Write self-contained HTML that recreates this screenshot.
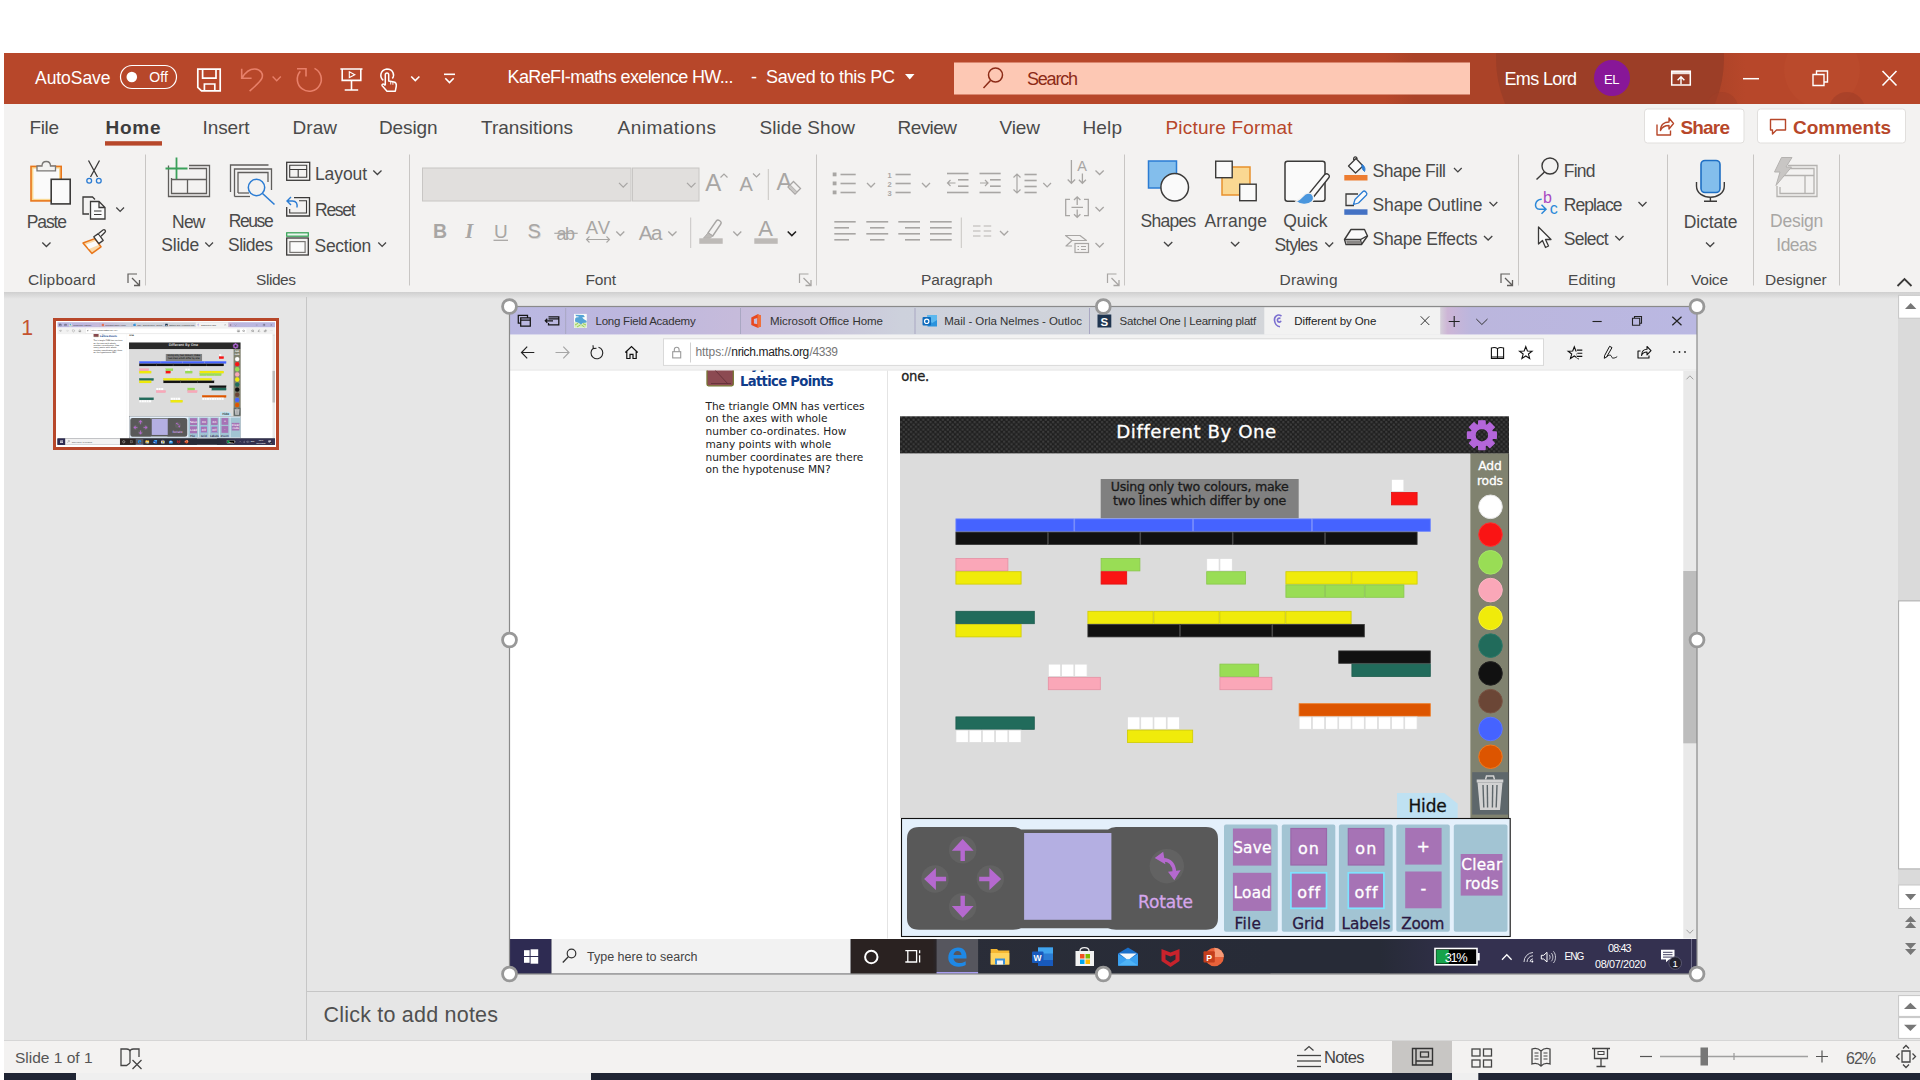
<!DOCTYPE html>
<html lang="en"><head><meta charset="utf-8"><title>KaReFI-maths exelence HW - PowerPoint</title>
<style>
html,body{margin:0;padding:0;background:#fff;width:1920px;height:1080px;overflow:hidden}
svg{display:block;position:absolute;left:0;top:0;font-family:'Liberation Sans',sans-serif}
text{white-space:pre;font-variant-ligatures:none}
</style></head><body>
<svg width="1920" height="1080" viewBox="0 0 1920 1080">
<defs>
<linearGradient id="ribshadow" x1="0" y1="0" x2="0" y2="1"><stop offset="0" stop-color="#CFCFCF"/><stop offset="1" stop-color="#E6E6E6"/></linearGradient>
<linearGradient id="tbdark" x1="0" y1="0" x2="1" y2="0"><stop offset="0" stop-color="#AB4328" stop-opacity="0"/><stop offset=".08" stop-color="#AB4328" stop-opacity="1"/><stop offset=".9" stop-color="#AB4328" stop-opacity="1"/><stop offset="1" stop-color="#AB4328" stop-opacity="0"/></linearGradient>
<clipPath id="tbclip"><rect x="4" y="53" width="1916" height="51"/></clipPath>

<linearGradient id="tabgrad" x1="0" y1="0" x2="1" y2="0"><stop offset="0" stop-color="#BAB8E2"/><stop offset=".10" stop-color="#BDB7DE"/><stop offset=".19" stop-color="#C6BBDB"/><stop offset=".26" stop-color="#C9C4DB"/><stop offset=".33" stop-color="#CDD1DC"/><stop offset=".62" stop-color="#D3D6DA"/><stop offset=".783" stop-color="#D6D3DA"/><stop offset=".79" stop-color="#CDB5D6"/><stop offset=".81" stop-color="#BBB6DD"/><stop offset="1" stop-color="#BAB8E2"/></linearGradient>
<pattern id="dots" x="900" y="416" width="4.9" height="4.9" patternUnits="userSpaceOnUse"><rect width="4.9" height="4.9" fill="#1F1F1F"/><circle cx="1.22" cy="1.22" r="1.25" fill="#3D3D3D"/><circle cx="3.67" cy="3.67" r="1.25" fill="#3D3D3D"/></pattern>
<clipPath id="pageclip"><rect x="509.5" y="370.5" width="1187.5" height="568"/></clipPath>
<linearGradient id="tkgrad" x1="0" y1="0" x2="1" y2="0"><stop offset="0" stop-color="#2A2221"/><stop offset=".195" stop-color="#2A2221"/><stop offset=".22" stop-color="#2A2D38"/><stop offset="1" stop-color="#272B37"/></linearGradient>
<linearGradient id="tkgrad2" x1="0" y1="0" x2="1" y2="0"><stop offset="0" stop-color="#272B37"/><stop offset="1" stop-color="#343150"/></linearGradient>

</defs>
<g id="titlebar">
<rect x="4" y="53" width="1916" height="51" fill="#B7472A" />
<rect x="1385" y="53" width="360" height="51" fill="url(#tbdark)"/>
<circle cx="1610" cy="59" r="114" fill="#9C3E27" clip-path="url(#tbclip)"/>
<circle cx="1822" cy="70" r="38" fill="#BF4E2E" opacity=".45" clip-path="url(#tbclip)"/>
<circle cx="1847" cy="110" r="18" fill="#A03E28" opacity=".6" clip-path="url(#tbclip)"/>
<circle cx="1722" cy="108" r="16" fill="#A03E28" opacity=".5" clip-path="url(#tbclip)"/>
<text x="35" y="84" font-size="17.5" fill="#fff" textLength="75.5" lengthAdjust="spacing" >AutoSave</text>
<rect x="120.5" y="65.5" width="56" height="23" fill="none" stroke="#fff" stroke-width="1.2" rx="11.5" />
<circle cx="131.8" cy="77" r="5.3" fill="#fff" />
<text x="149.3" y="82" font-size="14" fill="#fff" textLength="18.7" lengthAdjust="spacing" >Off</text>
<path d="M197.8 69.2 H220.2 V90.8 H201.5 L197.8 87.3 Z M202.6 69.2 V78.2 H216 V69.2 M204.4 90.8 V84 H214.8 V90.8" fill="none" stroke="#fff" stroke-width="1.7" stroke-linejoin="miter"/>
<path d="M241.7 68.8 V78.3 H251.6 M242 78 C245.5 72 250 68.8 255 69 C260.5 69.3 263.5 73.5 262 78 C261 81 256 85.5 249.6 91.2" fill="none" stroke="#E8806A" stroke-width="1.6" />
<path d="M272.6 76.55 L276.7 80.65 L280.8 76.55" fill="none" stroke="#E8806A" stroke-width="1.4" stroke-linecap="butt" stroke-linejoin="miter"/>
<path d="M314.5 68.4 A12 12 0 1 1 300.3 71.3 M297 68.8 H306 V76.5" fill="none" stroke="#E8806A" stroke-width="1.6" />
<path d="M340.4 69 H362.5 M342.2 69 V80.4 H360.8 V69 M351.5 80.4 V90 M344.7 90 H358.2" fill="none" stroke="#fff" stroke-width="1.6" />
<path d="M349.3 71.8 L354.8 74.7 L349.3 77.6 Z" fill="none" stroke="#fff" stroke-width="1.1" />
<path d="M383.3 80.3 C379.5 77.5 379.8 70 386.8 69 C393.5 69 394.8 75.5 392.3 78.5" fill="none" stroke="#fff" stroke-width="1.5" />
<path d="M385.3 85.5 V74.8 C385.3 72.3 388.7 72.3 388.7 74.8 V81 L394 82 C396 82.5 396.6 83.8 396.3 86 L395.3 91.2 H387 L382.2 85.8 C381.3 84.5 383.3 82.8 385.3 85.5" fill="none" stroke="#fff" stroke-width="1.5" stroke-linejoin="round"/>
<path d="M390.7 81.5 V84.5 M392.9 82 V84.8" fill="none" stroke="#fff" stroke-width="0.9" />
<path d="M411.2 76.55 L415.3 80.65 L419.4 76.55" fill="none" stroke="#fff" stroke-width="1.6" stroke-linecap="butt" stroke-linejoin="miter"/>
<line x1="444" y1="74.3" x2="455" y2="74.3" stroke="#fff" stroke-width="1.6" />
<path d="M445.3 78.3 L449.5 82.5 L453.7 78.3" fill="none" stroke="#fff" stroke-width="1.6" stroke-linecap="butt" stroke-linejoin="miter"/>
<text x="507.5" y="83" font-size="18" fill="#fff" textLength="226" lengthAdjust="spacing" >KaReFI-maths exelence HW...</text>
<text x="751" y="83" font-size="18" fill="#fff" >-</text>
<text x="766" y="83" font-size="18" fill="#fff" textLength="129" lengthAdjust="spacing" >Saved to this PC</text>
<path d="M905 74 H914.5 L909.75 79.5 Z" fill="#fff" />
<rect x="954" y="62.5" width="516" height="32" fill="#FDC8B4" />
<circle cx="995.5" cy="75" r="7" fill="none" stroke="#8C2B17" stroke-width="1.5" />
<line x1="990.5" y1="80.5" x2="983.5" y2="88" stroke="#8C2B17" stroke-width="1.5" />
<text x="1027" y="85" font-size="18" fill="#8C2B17" textLength="51" lengthAdjust="spacing" >Search</text>
<text x="1504.5" y="85" font-size="18" fill="#fff" textLength="72.5" lengthAdjust="spacing" >Ems Lord</text>
<circle cx="1612" cy="78" r="18" fill="#881798" />
<text x="1604" y="84.3" font-size="13" fill="#fff" textLength="15.5" lengthAdjust="spacing" >EL</text>
<rect x="1671.7" y="71.2" width="18.6" height="13.8" fill="none" stroke="#fff" stroke-width="1.5" />
<rect x="1671.7" y="71.2" width="18.6" height="3" fill="#fff" opacity=".85"/>
<path d="M1681 84.3 V77 M1677.6 80.3 L1681 76.8 L1684.4 80.3" fill="none" stroke="#fff" stroke-width="1.4" />
<line x1="1743" y1="78.7" x2="1759" y2="78.7" stroke="#fff" stroke-width="1.5" />
<path d="M1813 74.5 H1824 V85.5 H1813 Z M1816.5 74 V71 H1827.5 V82 H1824.5" fill="none" stroke="#fff" stroke-width="1.4" />
<path d="M1882.5 71 L1896.5 85.5 M1896.5 71 L1882.5 85.5" fill="none" stroke="#fff" stroke-width="1.6" />
</g>
<g id="tabs">
<rect x="4" y="104" width="1916" height="188" fill="#F3F2F1" />
<text x="29.5" y="134" font-size="19" fill="#4A4A4A" textLength="29.5" lengthAdjust="spacing" >File</text>
<text x="202.5" y="134" font-size="19" fill="#4A4A4A" textLength="47" lengthAdjust="spacing" >Insert</text>
<text x="292.5" y="134" font-size="19" fill="#4A4A4A" textLength="44.5" lengthAdjust="spacing" >Draw</text>
<text x="379" y="134" font-size="19" fill="#4A4A4A" textLength="58.5" lengthAdjust="spacing" >Design</text>
<text x="481" y="134" font-size="19" fill="#4A4A4A" textLength="92" lengthAdjust="spacing" >Transitions</text>
<text x="617.5" y="134" font-size="19" fill="#4A4A4A" textLength="98.5" lengthAdjust="spacing" >Animations</text>
<text x="759.5" y="134" font-size="19" fill="#4A4A4A" textLength="95.5" lengthAdjust="spacing" >Slide Show</text>
<text x="897.5" y="134" font-size="19" fill="#4A4A4A" textLength="59.5" lengthAdjust="spacing" >Review</text>
<text x="999.5" y="134" font-size="19" fill="#4A4A4A" textLength="40.5" lengthAdjust="spacing" >View</text>
<text x="1082.5" y="134" font-size="19" fill="#4A4A4A" textLength="39.5" lengthAdjust="spacing" >Help</text>
<text x="105.5" y="134" font-size="19" fill="#3D3D3D" font-weight="700" textLength="55" lengthAdjust="spacing" >Home</text>
<rect x="105" y="141.2" width="57" height="4.4" fill="#B7472A" />
<text x="1165.5" y="134" font-size="19" fill="#B7472A" textLength="127" lengthAdjust="spacing" >Picture Format</text>
<rect x="1644.5" y="109" width="99.5" height="34" fill="#fff" stroke="#E1DFDD" stroke-width="1" rx="3" />
<path d="M1657 124.5 V135 H1670.5 V130.5 M1660.5 130.5 C1660.5 124 1665 122 1669 122 V118 L1673.5 123.5 L1669 129 V125.5 C1664.5 125.5 1662 127 1660.5 130.5 Z" fill="none" stroke="#B7472A" stroke-width="1.4" stroke-linejoin="round"/>
<text x="1680.5" y="134" font-size="19" fill="#B7472A" font-weight="700" textLength="49.5" lengthAdjust="spacing" >Share</text>
<rect x="1757.5" y="109" width="148" height="34" fill="#fff" stroke="#E1DFDD" stroke-width="1" rx="3" />
<path d="M1770.5 119.5 H1785.5 V130 H1776.5 L1772.5 134 V130 H1770.5 Z" fill="none" stroke="#B7472A" stroke-width="1.4" stroke-linejoin="round"/>
<text x="1793" y="134" font-size="19" fill="#B7472A" font-weight="700" textLength="98" lengthAdjust="spacing" >Comments</text>
</g>
<g id="ribbon">
<line x1="145.5" y1="154.5" x2="145.5" y2="285.5" stroke="#C8C6C4" stroke-width="1" />
<line x1="409.5" y1="154.5" x2="409.5" y2="285.5" stroke="#C8C6C4" stroke-width="1" />
<line x1="816.5" y1="154.5" x2="816.5" y2="285.5" stroke="#C8C6C4" stroke-width="1" />
<line x1="1124.5" y1="154.5" x2="1124.5" y2="285.5" stroke="#C8C6C4" stroke-width="1" />
<line x1="1518.5" y1="154.5" x2="1518.5" y2="285.5" stroke="#C8C6C4" stroke-width="1" />
<line x1="1667.5" y1="154.5" x2="1667.5" y2="285.5" stroke="#C8C6C4" stroke-width="1" />
<line x1="1753.5" y1="154.5" x2="1753.5" y2="285.5" stroke="#C8C6C4" stroke-width="1" />
<line x1="1839.5" y1="154.5" x2="1839.5" y2="285.5" stroke="#C8C6C4" stroke-width="1" />
<text x="28" y="285" font-size="15.5" fill="#4A4A4A" textLength="67.7" lengthAdjust="spacing" >Clipboard</text>
<text x="256" y="285" font-size="15.5" fill="#4A4A4A" textLength="40" lengthAdjust="spacing" >Slides</text>
<text x="585.5" y="285" font-size="15.5" fill="#4A4A4A" textLength="30.5" lengthAdjust="spacing" >Font</text>
<text x="921" y="285" font-size="15.5" fill="#4A4A4A" textLength="71.5" lengthAdjust="spacing" >Paragraph</text>
<text x="1279.5" y="285" font-size="15.5" fill="#4A4A4A" textLength="58" lengthAdjust="spacing" >Drawing</text>
<text x="1568" y="285" font-size="15.5" fill="#4A4A4A" textLength="47.7" lengthAdjust="spacing" >Editing</text>
<text x="1691" y="285" font-size="15.5" fill="#4A4A4A" textLength="37" lengthAdjust="spacing" >Voice</text>
<text x="1765" y="285" font-size="15.5" fill="#4A4A4A" textLength="61.7" lengthAdjust="spacing" >Designer</text>
<path d="M128 283 V274 H137" fill="none" stroke="#605E5C" stroke-width="1.2" />
<path d="M132 278 L139.5 285.5 M134 285.5 H139.5 V280" fill="none" stroke="#605E5C" stroke-width="1.3" />
<path d="M799.5 283 V274 H808.5" fill="none" stroke="#A8A6A4" stroke-width="1.2" />
<path d="M803.5 278 L811.0 285.5 M805.5 285.5 H811.0 V280" fill="none" stroke="#A8A6A4" stroke-width="1.3" />
<path d="M1107.5 283 V274 H1116.5" fill="none" stroke="#A8A6A4" stroke-width="1.2" />
<path d="M1111.5 278 L1119.0 285.5 M1113.5 285.5 H1119.0 V280" fill="none" stroke="#A8A6A4" stroke-width="1.3" />
<path d="M1501 283 V274 H1510" fill="none" stroke="#605E5C" stroke-width="1.2" />
<path d="M1505 278 L1512.5 285.5 M1507 285.5 H1512.5 V280" fill="none" stroke="#605E5C" stroke-width="1.3" />
<path d="M1897.5 286 L1904.5 279 L1911.5 286" fill="none" stroke="#3B3A39" stroke-width="1.8" />
<rect x="31" y="166.4" width="30.2" height="34.5" fill="#FAD892" stroke="#E8761B" stroke-width="1.6" />
<rect x="33.4" y="168.6" width="25.6" height="30.2" fill="#FAFAFA" />
<path d="M37 170.8 V166 H42 C42 160 50.5 160 50.5 166 H55.5 V170.8 Z" fill="#F3F2F1" stroke="#797775" stroke-width="1.3" />
<rect x="51.2" y="179.3" width="19" height="24.6" fill="#FAFAFA" stroke="#3B3A39" stroke-width="1.6" />
<text x="26.7" y="227.5" font-size="17.5" fill="#4A4A4A" textLength="40.3" lengthAdjust="spacing" >Paste</text>
<path d="M42.3 242.45 L46.4 246.55 L50.5 242.45" fill="none" stroke="#444" stroke-width="1.3" stroke-linecap="butt" stroke-linejoin="miter"/>
<path d="M88.5 160.5 L97.5 177 M99.5 160.5 L90.5 177" fill="none" stroke="#3B3A39" stroke-width="1.3" />
<circle cx="89.2" cy="180.8" r="2.4" fill="none" stroke="#2B7CD3" stroke-width="1.3" />
<circle cx="98.8" cy="180.8" r="2.4" fill="none" stroke="#2B7CD3" stroke-width="1.3" />
<path d="M89 214 H83 V197 H92.5 L95 199.5" fill="none" stroke="#3B3A39" stroke-width="1.3" />
<path d="M90.5 201.5 H99 L105 207.5 V219 H90.5 Z M99 201.5 V207.5 H105" fill="#FAFAFA" stroke="#3B3A39" stroke-width="1.3" />
<path d="M94 211 H101.5 M94 214.5 H101.5" fill="none" stroke="#3B3A39" stroke-width="1.1" />
<path d="M116.3 207.575 L120.15 211.425 L124 207.575" fill="none" stroke="#444" stroke-width="1.3" stroke-linecap="butt" stroke-linejoin="miter"/>
<path d="M83 243 L94.8 238.6 L101 246.8 L92 253.4 Z" fill="#FBD9A8" stroke="#E8761B" stroke-width="1.5" stroke-linejoin="round"/>
<path d="M86 244.5 L95.5 241 L98.5 245 L89 249 Z" fill="#FAFAFA" />
<path d="M93.8 236.8 L98.3 233.6 L103.2 240.4 L98.8 243.6 Z" fill="#FAFAFA" stroke="#3B3A39" stroke-width="1.3" stroke-linejoin="round"/>
<path d="M98.6 233.6 L103 230 C104.6 229 106.3 231 105 232.3 L101 236.2" fill="#FAFAFA" stroke="#3B3A39" stroke-width="1.3" />
<path d="M168.5 165.5 V196.5 H209.5 V165.5 H189" fill="none" stroke="#605E5C" stroke-width="1.3" />
<path d="M171.5 178 V193.5 H206.5 V168.5 H189" fill="none" stroke="#605E5C" stroke-width="1.3" />
<path d="M171.5 179.5 H206.5 M187.5 179.5 V193.5" fill="none" stroke="#605E5C" stroke-width="1.3" />
<path d="M176.5 157.5 V179 M165.5 168.5 H187.5" fill="none" stroke="#3AA05A" stroke-width="1.8" />
<text x="172" y="227.5" font-size="17.5" fill="#4A4A4A" textLength="33.5" lengthAdjust="spacing" >New</text>
<text x="161.3" y="251" font-size="17.5" fill="#4A4A4A" textLength="38" lengthAdjust="spacing" >Slide</text>
<path d="M205.3 242.575 L209.15 246.425 L213 242.575" fill="none" stroke="#444" stroke-width="1.3" stroke-linecap="butt" stroke-linejoin="miter"/>
<path d="M230.5 192 V165 H268.5" fill="none" stroke="#605E5C" stroke-width="1.3" />
<path d="M234.5 196.5 V169 H271.5 V190" fill="none" stroke="#605E5C" stroke-width="1.3" />
<path d="M234.5 196.5 H250" fill="none" stroke="#605E5C" stroke-width="1.3" />
<path d="M238 193 V172.5 H268 V182" fill="none" stroke="#605E5C" stroke-width="1.3" />
<path d="M238 193 H249" fill="none" stroke="#605E5C" stroke-width="1.3" />
<circle cx="256.5" cy="187.5" r="8.2" fill="#F3F2F1" stroke="#2B7CD3" stroke-width="1.5" />
<line x1="262.5" y1="193.5" x2="274.5" y2="204.5" stroke="#2B7CD3" stroke-width="1.6" />
<text x="228.7" y="226.8" font-size="17.5" fill="#4A4A4A" textLength="45" lengthAdjust="spacing" >Reuse</text>
<text x="228" y="250.7" font-size="17.5" fill="#4A4A4A" textLength="45" lengthAdjust="spacing" >Slides</text>
<rect x="286.7" y="162.3" width="23" height="18" fill="none" stroke="#3B3A39" stroke-width="1.3" />
<path d="M289.7 165.3 H306.7 V177.3 H289.7 Z M289.7 169.5 H306.7 M298.2 169.5 V177.3" fill="none" stroke="#3B3A39" stroke-width="1.1" />
<text x="315" y="179.5" font-size="17.5" fill="#4A4A4A" textLength="52" lengthAdjust="spacing" >Layout</text>
<path d="M373.3 170.45 L377.4 174.55 L381.5 170.45" fill="none" stroke="#444" stroke-width="1.3" stroke-linecap="butt" stroke-linejoin="miter"/>
<path d="M294 197.7 H309.5 V216 H286.7 V207" fill="none" stroke="#3B3A39" stroke-width="1.3" />
<path d="M299 200.7 H306.5 V213 H289.7 V209" fill="none" stroke="#3B3A39" stroke-width="1.1" />
<path d="M291 197 L287 201 L291 205 M287.5 201 H292.5 C296.5 201 297.5 204 297 207.5" fill="none" stroke="#2B7CD3" stroke-width="1.4" />
<text x="315" y="215.5" font-size="17.5" fill="#4A4A4A" textLength="40.7" lengthAdjust="spacing" >Reset</text>
<rect x="286.7" y="232.8" width="21.6" height="3.4" fill="#EAF6EE" stroke="#2E9E4F" stroke-width="1.2" />
<rect x="286.7" y="238" width="21.6" height="17" fill="none" stroke="#3B3A39" stroke-width="1.3" />
<rect x="289.9" y="241.6" width="15.2" height="10.8" fill="#FAFAFA" stroke="#797775" stroke-width="1.2" />
<text x="314.5" y="251.6" font-size="17.5" fill="#4A4A4A" textLength="56.7" lengthAdjust="spacing" >Section</text>
<path d="M378.3 242.575 L382.15 246.425 L386 242.575" fill="none" stroke="#444" stroke-width="1.3" stroke-linecap="butt" stroke-linejoin="miter"/>
<rect x="422.5" y="168" width="208.5" height="33" fill="#E1DFDD" stroke="#C8C6C4" stroke-width="1" />
<rect x="632.5" y="168" width="66.5" height="33" fill="#E1DFDD" stroke="#C8C6C4" stroke-width="1" />
<path d="M619 182.875 L623.25 187.125 L627.5 182.875" fill="none" stroke="#A8A6A4" stroke-width="1.3" stroke-linecap="butt" stroke-linejoin="miter"/>
<path d="M687 182.875 L691.25 187.125 L695.5 182.875" fill="none" stroke="#A8A6A4" stroke-width="1.3" stroke-linecap="butt" stroke-linejoin="miter"/>
<text x="705.3" y="190.5" font-size="24" fill="#A8A6A4" textLength="16.7" lengthAdjust="spacing" >A</text>
<path d="M720.5 177.5 L724 174 L727.5 177.5" fill="none" stroke="#A8A6A4" stroke-width="1.2" />
<text x="739.5" y="190.5" font-size="20" fill="#A8A6A4" textLength="13.5" lengthAdjust="spacing" >A</text>
<path d="M753 173.5 L756.5 177 L760 173.5" fill="none" stroke="#A8A6A4" stroke-width="1.2" />
<line x1="768.3" y1="169" x2="768.3" y2="200" stroke="#C8C6C4" stroke-width="1" />
<text x="776.5" y="190" font-size="23.5" fill="#A8A6A4" textLength="15.5" lengthAdjust="spacing" >A</text>
<path d="M793.5 181.5 L800.5 188.5 L795 194 L788 187 Z" fill="#F3F2F1" stroke="#A8A6A4" stroke-width="1.3" />
<path d="M790.3 185 L797.3 192 L795 194 L788 187 Z" fill="#C8C6C4" stroke="#A8A6A4" stroke-width="0.8" />
<text x="433" y="238" font-size="19.5" fill="#A8A6A4" font-weight="700" textLength="11" lengthAdjust="spacing" >B</text>
<text x="465.3" y="238" font-size="20.5" fill="#A8A6A4" font-family="'Liberation Serif',serif" font-weight="700" font-style="italic" >I</text>
<text x="494" y="237.5" font-size="19" fill="#A8A6A4" textLength="13.5" lengthAdjust="spacing" >U</text>
<line x1="493.5" y1="240.3" x2="508" y2="240.3" stroke="#A8A6A4" stroke-width="1.3" />
<text x="528.3" y="239" font-size="20" fill="#D6D4D2" textLength="11.7" lengthAdjust="spacing" >S</text>
<text x="527.5" y="238" font-size="20" fill="#A8A6A4" textLength="11.7" lengthAdjust="spacing" >S</text>
<text x="556.5" y="239.5" font-size="18" fill="#A8A6A4" textLength="18.5" lengthAdjust="spacing" >ab</text>
<line x1="554.3" y1="233.3" x2="577.7" y2="233.3" stroke="#A8A6A4" stroke-width="1.2" />
<text x="585.8" y="234" font-size="18.5" fill="#A8A6A4" textLength="24.2" lengthAdjust="spacing" >AV</text>
<path d="M586.5 239.5 H609.5 M589.5 236.5 L586.5 239.5 L589.5 242.5 M606.5 236.5 L609.5 239.5 L606.5 242.5" fill="none" stroke="#A8A6A4" stroke-width="1.1" />
<path d="M616.3 231.5 L620.3 235.5 L624.3 231.5" fill="none" stroke="#A8A6A4" stroke-width="1.3" stroke-linecap="butt" stroke-linejoin="miter"/>
<text x="638.8" y="240" font-size="20.5" fill="#A8A6A4" textLength="23.7" lengthAdjust="spacing" >Aa</text>
<path d="M668.3 231.45 L672.4 235.55 L676.5 231.45" fill="none" stroke="#A8A6A4" stroke-width="1.3" stroke-linecap="butt" stroke-linejoin="miter"/>
<line x1="690.7" y1="217.5" x2="690.7" y2="248" stroke="#C8C6C4" stroke-width="1" />
<path d="M708 232.8 L716.3 221 C718 218.8 722.3 221.5 720.8 224 L712.7 236 Z" fill="none" stroke="#A8A6A4" stroke-width="1.4" stroke-linejoin="round"/>
<path d="M708 232.8 L712.7 236 L710 238.3 H703.3 Z" fill="#BDBAB7" stroke="#A8A6A4" stroke-width="0.8" stroke-linejoin="round"/>
<rect x="699.3" y="238.3" width="23.4" height="5.5" fill="#BDBAB7" />
<path d="M733.3 231.5 L737.3 235.5 L741.3 231.5" fill="none" stroke="#A8A6A4" stroke-width="1.3" stroke-linecap="butt" stroke-linejoin="miter"/>
<text x="758.3" y="236" font-size="22" fill="#A8A6A4" textLength="15.2" lengthAdjust="spacing" >A</text>
<rect x="754.3" y="238.3" width="23.4" height="5.5" fill="#BDBAB7" />
<path d="M787.7 231.425 L791.85 235.575 L796 231.425" fill="none" stroke="#201F1E" stroke-width="1.5" stroke-linecap="butt" stroke-linejoin="miter"/>
<rect x="832.7" y="172.5" width="3.8" height="3.8" fill="#A8A6A4" />
<line x1="840.5" y1="174.5" x2="855.7" y2="174.5" stroke="#A8A6A4" stroke-width="1.6" />
<rect x="832.7" y="181.5" width="3.8" height="3.8" fill="#A8A6A4" />
<line x1="840.5" y1="183.5" x2="855.7" y2="183.5" stroke="#A8A6A4" stroke-width="1.6" />
<rect x="832.7" y="190.5" width="3.8" height="3.8" fill="#A8A6A4" />
<line x1="840.5" y1="192.5" x2="855.7" y2="192.5" stroke="#A8A6A4" stroke-width="1.6" />
<path d="M867 183 L871 187 L875 183" fill="none" stroke="#A8A6A4" stroke-width="1.3" stroke-linecap="butt" stroke-linejoin="miter"/>
<text x="887.5" y="177.5" font-size="7.5" fill="#A8A6A4" font-weight="700" >1</text>
<line x1="895.5" y1="174.5" x2="910.7" y2="174.5" stroke="#A8A6A4" stroke-width="1.6" />
<text x="887.5" y="186.5" font-size="7.5" fill="#A8A6A4" font-weight="700" >2</text>
<line x1="895.5" y1="183.5" x2="910.7" y2="183.5" stroke="#A8A6A4" stroke-width="1.6" />
<text x="887.5" y="195.5" font-size="7.5" fill="#A8A6A4" font-weight="700" >3</text>
<line x1="895.5" y1="192.5" x2="910.7" y2="192.5" stroke="#A8A6A4" stroke-width="1.6" />
<path d="M922 183 L926 187 L930 183" fill="none" stroke="#A8A6A4" stroke-width="1.3" stroke-linecap="butt" stroke-linejoin="miter"/>
<line x1="947" y1="173.5" x2="968.5" y2="173.5" stroke="#A8A6A4" stroke-width="1.6" />
<line x1="947" y1="192.5" x2="968.5" y2="192.5" stroke="#A8A6A4" stroke-width="1.6" />
<line x1="958" y1="179.8" x2="968.5" y2="179.8" stroke="#A8A6A4" stroke-width="1.6" />
<line x1="958" y1="186.2" x2="968.5" y2="186.2" stroke="#A8A6A4" stroke-width="1.6" />
<path d="M947.5 183 H955.5 M950.5 180 L947.5 183 L950.5 186" fill="none" stroke="#A8A6A4" stroke-width="1.2" />
<line x1="979.5" y1="173.5" x2="1000.7" y2="173.5" stroke="#A8A6A4" stroke-width="1.6" />
<line x1="979.5" y1="192.5" x2="1000.7" y2="192.5" stroke="#A8A6A4" stroke-width="1.6" />
<line x1="990" y1="179.8" x2="1000.7" y2="179.8" stroke="#A8A6A4" stroke-width="1.6" />
<line x1="990" y1="186.2" x2="1000.7" y2="186.2" stroke="#A8A6A4" stroke-width="1.6" />
<path d="M980 183 H988 M985 180 L988 183 L985 186" fill="none" stroke="#A8A6A4" stroke-width="1.2" />
<line x1="1024.5" y1="174.5" x2="1036.7" y2="174.5" stroke="#A8A6A4" stroke-width="1.6" />
<line x1="1024.5" y1="180.5" x2="1036.7" y2="180.5" stroke="#A8A6A4" stroke-width="1.6" />
<line x1="1024.5" y1="186.5" x2="1036.7" y2="186.5" stroke="#A8A6A4" stroke-width="1.6" />
<line x1="1024.5" y1="192.5" x2="1036.7" y2="192.5" stroke="#A8A6A4" stroke-width="1.6" />
<path d="M1017 174 V193 M1013.5 177.5 L1017 174 L1020.5 177.5 M1013.5 189.5 L1017 193 L1020.5 189.5" fill="none" stroke="#A8A6A4" stroke-width="1.2" />
<path d="M1043.3 183.075 L1047.15 186.925 L1051 183.075" fill="none" stroke="#A8A6A4" stroke-width="1.3" stroke-linecap="butt" stroke-linejoin="miter"/>
<path d="M1071.4 160 V183.3 M1067.7 179.5 L1071.4 183.3 L1075.1 179.5 M1082.4 173.5 V183.3 M1078.9 179.8 L1082.4 183.3 L1085.9 179.8" fill="none" stroke="#A8A6A4" stroke-width="1.3" />
<text x="1077.3" y="171.3" font-size="14.5" fill="#A8A6A4" textLength="10.2" lengthAdjust="spacing" >A</text>
<path d="M1095.5 170.45 L1099.6 174.55 L1103.7 170.45" fill="none" stroke="#A8A6A4" stroke-width="1.3" stroke-linecap="butt" stroke-linejoin="miter"/>
<path d="M1070 199.3 H1065.7 V215.7 H1070 M1084 199.3 H1088.3 V215.7 H1084 M1071.5 207.3 H1083" fill="none" stroke="#A8A6A4" stroke-width="1.3" />
<path d="M1077.2 196.8 V205 M1074 200 L1077.2 196.8 L1080.4 200 M1077.2 217.3 V209.5 M1074 214.2 L1077.2 217.3 L1080.4 214.2" fill="none" stroke="#A8A6A4" stroke-width="1.3" />
<path d="M1095.5 206.95 L1099.6 211.05 L1103.7 206.95" fill="none" stroke="#A8A6A4" stroke-width="1.3" stroke-linecap="butt" stroke-linejoin="miter"/>
<path d="M1065.5 235.5 H1080 L1086.5 240.5 H1072 Z M1072 240.5 L1066 246 H1072" fill="none" stroke="#A8A6A4" stroke-width="1.2" stroke-linejoin="round"/>
<rect x="1075" y="243.5" width="13.5" height="9" fill="none" stroke="#A8A6A4" stroke-width="1.2" />
<path d="M1077.5 246.5 H1079 M1081 246.5 H1086 M1077.5 249.5 H1079 M1081 249.5 H1086" fill="none" stroke="#A8A6A4" stroke-width="1.1" />
<path d="M1095.5 242.95 L1099.6 247.05 L1103.7 242.95" fill="none" stroke="#A8A6A4" stroke-width="1.3" stroke-linecap="butt" stroke-linejoin="miter"/>
<line x1="834.3" y1="221.8" x2="855.7" y2="221.8" stroke="#A8A6A4" stroke-width="1.6" />
<line x1="834.3" y1="233.8" x2="855.7" y2="233.8" stroke="#A8A6A4" stroke-width="1.6" />
<line x1="834.3" y1="227.8" x2="849" y2="227.8" stroke="#A8A6A4" stroke-width="1.6" />
<line x1="834.3" y1="239.8" x2="849" y2="239.8" stroke="#A8A6A4" stroke-width="1.6" />
<line x1="866.3" y1="221.8" x2="888.2" y2="221.8" stroke="#A8A6A4" stroke-width="1.6" />
<line x1="866.3" y1="233.8" x2="888.2" y2="233.8" stroke="#A8A6A4" stroke-width="1.6" />
<line x1="870" y1="227.8" x2="884.5" y2="227.8" stroke="#A8A6A4" stroke-width="1.6" />
<line x1="870" y1="239.8" x2="884.5" y2="239.8" stroke="#A8A6A4" stroke-width="1.6" />
<line x1="898.3" y1="221.8" x2="920" y2="221.8" stroke="#A8A6A4" stroke-width="1.6" />
<line x1="898.3" y1="233.8" x2="920" y2="233.8" stroke="#A8A6A4" stroke-width="1.6" />
<line x1="905" y1="227.8" x2="920" y2="227.8" stroke="#A8A6A4" stroke-width="1.6" />
<line x1="905" y1="239.8" x2="920" y2="239.8" stroke="#A8A6A4" stroke-width="1.6" />
<line x1="930" y1="221.8" x2="951.7" y2="221.8" stroke="#A8A6A4" stroke-width="1.6" />
<line x1="930" y1="227.8" x2="951.7" y2="227.8" stroke="#A8A6A4" stroke-width="1.6" />
<line x1="930" y1="233.8" x2="951.7" y2="233.8" stroke="#A8A6A4" stroke-width="1.6" />
<line x1="930" y1="239.8" x2="951.7" y2="239.8" stroke="#A8A6A4" stroke-width="1.6" />
<line x1="961.3" y1="217.5" x2="961.3" y2="248" stroke="#C8C6C4" stroke-width="1" />
<line x1="973" y1="226" x2="980.5" y2="226" stroke="#C4C2C0" stroke-width="1.3" />
<line x1="983.7" y1="226" x2="991.2" y2="226" stroke="#C4C2C0" stroke-width="1.3" />
<line x1="973" y1="231" x2="980.5" y2="231" stroke="#C4C2C0" stroke-width="1.3" />
<line x1="983.7" y1="231" x2="991.2" y2="231" stroke="#C4C2C0" stroke-width="1.3" />
<line x1="973" y1="236" x2="980.5" y2="236" stroke="#C4C2C0" stroke-width="1.3" />
<line x1="983.7" y1="236" x2="991.2" y2="236" stroke="#C4C2C0" stroke-width="1.3" />
<path d="M1000 230.95 L1004.1 235.05 L1008.2 230.95" fill="none" stroke="#A8A6A4" stroke-width="1.3" stroke-linecap="butt" stroke-linejoin="miter"/>
<rect x="1148.5" y="161" width="28" height="27" fill="#83BEEC" stroke="#2B7CD3" stroke-width="1.5" />
<circle cx="1174.7" cy="187.2" r="13.8" fill="#FAFAFA" stroke="#3B3A39" stroke-width="1.5" />
<text x="1140.5" y="227" font-size="17.5" fill="#4A4A4A" textLength="55.8" lengthAdjust="spacing" >Shapes</text>
<path d="M1164 241.925 L1168.15 246.075 L1172.3 241.925" fill="none" stroke="#444" stroke-width="1.3" stroke-linecap="butt" stroke-linejoin="miter"/>
<rect x="1222" y="167" width="28" height="28" fill="#FAD892" stroke="#E8912D" stroke-width="1.5" />
<rect x="1215.7" y="161.2" width="16.5" height="16.5" fill="#FAFAFA" stroke="#3B3A39" stroke-width="1.4" />
<rect x="1239.7" y="184.2" width="16.5" height="16.5" fill="#FAFAFA" stroke="#3B3A39" stroke-width="1.4" />
<text x="1204.5" y="227" font-size="17.5" fill="#4A4A4A" textLength="62.5" lengthAdjust="spacing" >Arrange</text>
<path d="M1231 241.925 L1235.15 246.075 L1239.3 241.925" fill="none" stroke="#444" stroke-width="1.3" stroke-linecap="butt" stroke-linejoin="miter"/>
<rect x="1285" y="161.2" width="40" height="40" fill="#FAFAFA" stroke="#3B3A39" stroke-width="1.5" rx="2.5" />
<path d="M1328.6 178 L1313.5 197 L1309 193.6 L1324.5 174.8 C1327 172.3 1331 175.3 1328.6 178 Z" fill="#FAFAFA" stroke="#3B3A39" stroke-width="1.4" stroke-linejoin="round"/>
<path d="M1295.5 201 C1301.5 200.5 1302.5 193.5 1308.5 193 C1313.5 193.3 1315 198.5 1312 201.8 C1308 205.5 1299.5 205 1295.5 201 Z" fill="#4A96DD" stroke="#F3F2F1" stroke-width="1.2" />
<text x="1283.3" y="227" font-size="17.5" fill="#4A4A4A" textLength="44.2" lengthAdjust="spacing" >Quick</text>
<text x="1274.5" y="250.7" font-size="17.5" fill="#4A4A4A" textLength="43.5" lengthAdjust="spacing" >Styles</text>
<path d="M1325.3 242.525 L1329.25 246.475 L1333.2 242.525" fill="none" stroke="#444" stroke-width="1.3" stroke-linecap="butt" stroke-linejoin="miter"/>
<rect x="1344.3" y="175" width="23.2" height="5.5" fill="#ED7D31" />
<path d="M1348.5 166 L1356 158.5 L1363 166 L1355.5 173 Z M1354 160.5 C1352 156 1358 155.5 1357 160" fill="#FAFAFA" stroke="#3B3A39" stroke-width="1.3" stroke-linejoin="round"/>
<path d="M1362 164.5 C1365 166.5 1365.5 169 1364.5 171.5 C1362.5 170 1361.5 167.5 1362 164.5 Z" fill="#2B7CD3" stroke="#2B7CD3" stroke-width="1" />
<text x="1372.5" y="177" font-size="17.5" fill="#4A4A4A" textLength="73.5" lengthAdjust="spacing" >Shape Fill</text>
<path d="M1454 168.075 L1457.85 171.925 L1461.7 168.075" fill="none" stroke="#444" stroke-width="1.3" stroke-linecap="butt" stroke-linejoin="miter"/>
<rect x="1344.3" y="209.3" width="23.2" height="5.5" fill="#4472C4" />
<path d="M1358 194 H1346 V205.5 H1354" fill="none" stroke="#3B3A39" stroke-width="1.3" />
<path d="M1353.5 204.5 L1355 199.5 L1363 191.5 C1364.5 190 1368 193 1366.5 195 L1358.5 203 Z" fill="#FAFAFA" stroke="#2B7CD3" stroke-width="1.3" stroke-linejoin="round"/>
<text x="1372.5" y="210.8" font-size="17.5" fill="#4A4A4A" textLength="110" lengthAdjust="spacing" >Shape Outline</text>
<path d="M1489.5 202.05 L1493.4 205.95 L1497.3 202.05" fill="none" stroke="#444" stroke-width="1.3" stroke-linecap="butt" stroke-linejoin="miter"/>
<path d="M1351 229.5 H1364.5 L1367.5 236 L1361.5 244.5 H1346 L1344.5 239.5 Z" fill="#FAFAFA" stroke="#3B3A39" stroke-width="1.4" stroke-linejoin="round"/>
<path d="M1345 239.5 H1360.5 L1367 236 M1360.5 239.5 L1361.5 244.5" fill="none" stroke="#3B3A39" stroke-width="1.3" />
<path d="M1346 240.5 H1360 L1361 244 H1347 Z" fill="#8A8886" />
<text x="1372.5" y="244.5" font-size="17.5" fill="#4A4A4A" textLength="105" lengthAdjust="spacing" >Shape Effects</text>
<path d="M1484 235.925 L1488.15 240.075 L1492.3 235.925" fill="none" stroke="#444" stroke-width="1.3" stroke-linecap="butt" stroke-linejoin="miter"/>
<circle cx="1550" cy="166" r="8" fill="none" stroke="#3B3A39" stroke-width="1.4" />
<line x1="1544.5" y1="172" x2="1536.5" y2="179.5" stroke="#3B3A39" stroke-width="1.5" />
<text x="1563.7" y="177" font-size="17.5" fill="#4A4A4A" textLength="31.8" lengthAdjust="spacing" >Find</text>
<text x="1543" y="202.7" font-size="16" fill="#A84BC2" textLength="8.8" lengthAdjust="spacing" >b</text>
<text x="1549.8" y="214.3" font-size="16" fill="#2B88D8" textLength="6.2" lengthAdjust="spacing" >c</text>
<path d="M1541.7 199.3 C1534.5 199.5 1533.3 208.8 1539.5 209.3 H1545.3 M1541.5 204.8 L1546 209.3 L1541.5 213.8" fill="none" stroke="#2B88D8" stroke-width="1.5" />
<text x="1563.7" y="210.8" font-size="17.5" fill="#4A4A4A" textLength="58.8" lengthAdjust="spacing" >Replace</text>
<path d="M1638.5 202 L1642.5 206 L1646.5 202" fill="none" stroke="#444" stroke-width="1.3" stroke-linecap="butt" stroke-linejoin="miter"/>
<path d="M1538.5 227 V244 L1542.5 240.5 L1545.5 247.5 L1548.5 246 L1545.5 239.5 H1551 Z" fill="#FAFAFA" stroke="#3B3A39" stroke-width="1.3" stroke-linejoin="round"/>
<text x="1563.7" y="244.5" font-size="17.5" fill="#4A4A4A" textLength="45" lengthAdjust="spacing" >Select</text>
<path d="M1615.3 235.95 L1619.4 240.05 L1623.5 235.95" fill="none" stroke="#444" stroke-width="1.3" stroke-linecap="butt" stroke-linejoin="miter"/>
<rect x="1701" y="160.5" width="19" height="32" fill="#83BEEC" stroke="#1E6FC4" stroke-width="1.6" rx="4" />
<path d="M1696.5 182 V186 C1696.5 201 1724.3 201 1724.3 186 V182 M1710.4 197.5 V201 M1704 201.3 H1717" fill="none" stroke="#3B3A39" stroke-width="1.4" />
<text x="1683.7" y="227.5" font-size="17.5" fill="#4A4A4A" textLength="53.8" lengthAdjust="spacing" >Dictate</text>
<path d="M1706 242.425 L1710.15 246.575 L1714.3 242.425" fill="none" stroke="#444" stroke-width="1.3" stroke-linecap="butt" stroke-linejoin="miter"/>
<path d="M1788 165.5 H1817 V196.5 H1777 V186" fill="none" stroke="#B4B2B0" stroke-width="1.3" />
<path d="M1790 168.5 H1814 V193.5 H1780 V187 M1780 175.5 H1814 M1805 175.5 V193.5" fill="none" stroke="#B4B2B0" stroke-width="1.3" />
<path d="M1781.5 157.5 H1792 L1786 167 H1791.5 L1776 185.5 L1780 172 H1774.5 Z" fill="#C8C6C4" stroke="#B4B2B0" stroke-width="1" stroke-linejoin="round"/>
<text x="1770" y="227" font-size="17.5" fill="#A8A6A4" textLength="53.3" lengthAdjust="spacing" >Design</text>
<text x="1776.3" y="250.7" font-size="17.5" fill="#A8A6A4" textLength="40.7" lengthAdjust="spacing" >Ideas</text>
</g>
<g id="workspace">
<rect x="4" y="292" width="1916" height="748" fill="#E6E6E6" />
<rect x="4" y="292" width="1916" height="7" fill="url(#ribshadow)"/>
<line x1="306.5" y1="297" x2="306.5" y2="1040" stroke="#C6C6C6" stroke-width="1" />
<text x="21.3" y="335.3" font-size="21.3" fill="#C4532F" >1</text>
<line x1="307" y1="991.5" x2="1920" y2="991.5" stroke="#C6C6C6" stroke-width="1" />
<text x="323.5" y="1021.5" font-size="21.5" fill="#505050" textLength="174.5" lengthAdjust="spacing" >Click to add notes</text>
<rect x="1898" y="295" width="22" height="613.5" fill="#DADADA" />
<rect x="1898.6" y="295.3" width="23" height="22.9" fill="#fff" stroke="#C6C6C6" stroke-width="1" />
<path d="M1905 309 L1910.7 303 L1916.4 309 Z" fill="#777" />
<rect x="1898.6" y="600.9" width="23" height="268" fill="#fff" stroke="#ABABAB" stroke-width="1" />
<rect x="1898.6" y="885" width="23" height="23.5" fill="#fff" stroke="#C6C6C6" stroke-width="1" />
<path d="M1905 894 L1910.6 900.3 L1916.2 894 Z" fill="#777" />
<path d="M1905 922 L1910.6 916 L1916.2 922 Z M1905 928 L1910.6 922 L1916.2 928 Z" fill="#777" />
<path d="M1905 943 L1910.6 949 L1916.2 943 Z M1905 949 L1910.6 955 L1916.2 949 Z" fill="#777" />
<rect x="1898.6" y="995.6" width="23" height="20.8" fill="#fff" stroke="#C6C6C6" stroke-width="1" />
<path d="M1904 1009 L1910.4 1002.7 L1916.8 1009 Z" fill="#777" />
<rect x="1898.6" y="1017.6" width="23" height="20.8" fill="#fff" stroke="#C6C6C6" stroke-width="1" />
<path d="M1904 1024.8 L1910.4 1031 L1916.8 1024.8 Z" fill="#777" />
</g>
<rect x="54.5" y="319.5" width="223" height="129" fill="#fff" stroke="#B7472A" stroke-width="3" />
<g transform="translate(57.5 322.2) scale(0.18316 0.18368) translate(-509.5 -306)">
<rect x="509.5" y="306" width="1187.5" height="668" fill="#fff" />
<rect x="509.5" y="306" width="1187.5" height="28.7" fill="url(#tabgrad)" />
<line x1="565.7" y1="308" x2="565.7" y2="334" stroke="#A9A7C2" stroke-width="1" />
<line x1="740.5" y1="308" x2="740.5" y2="334" stroke="#A9A7C2" stroke-width="1" />
<line x1="915" y1="308" x2="915" y2="334" stroke="#A9A7C2" stroke-width="1" />
<line x1="1089.5" y1="308" x2="1089.5" y2="334" stroke="#A9A7C2" stroke-width="1" />
<rect x="1264.3" y="307.3" width="175.9" height="27.4" fill="#F2F2F2" />
<path d="M520.5 323 H518.3 V315.3 H527.5 V317.5 M520.7 317.8 H530.3 V326 H520.7 Z M520.7 320 H530.3" fill="none" stroke="#151515" stroke-width="1.25" />
<path d="M548.5 316.8 H558.8 V324.8 H548.5 V323 M548.5 318.8 H558.8 M545.3 320.8 H553 M547.3 318.8 L545.3 320.8 L547.3 322.8" fill="none" stroke="#151515" stroke-width="1.25" />
<rect x="574" y="313.9" width="12.8" height="14.1" fill="#FBFCFA" />
<rect x="574.3" y="322.2" width="12.2" height="5.5" fill="#D6EBBF" />
<path d="M575 325 L578 323.3 M577 327 L580.5 324.8 M581.5 325 L584.5 327 M583 323.6 L586 325" fill="none" stroke="#9BD04F" stroke-width="1" />
<path d="M575.3 314.8 L583.5 315 L585 317.2 L582.8 318.4 L586.7 321 L586.4 322.6 L582.6 323 L581 324.6 L579 323 L575 321.6 L575.2 318.6 L576.6 317 Z" fill="#55A4D6" />
<path d="M575 316.8 H578.5 M582.5 317.6 H586" fill="none" stroke="#FBFCFA" stroke-width="0.9" />
<text x="595.5" y="325" font-size="11.5" fill="#333" textLength="100.2" lengthAdjust="spacing" >Long Field Academy</text>
<path d="M751.3 317.4 L757.6 314.2 L761 315.4 V326.4 L757.6 327.7 L751.3 325 Z M753.9 318.9 L757.3 317.9 V324.3 L753.9 323.4 Z" fill="#E8481F" fill-rule="evenodd"/>
<path d="M757.6 314.2 L761 315.4 V326.4 L757.6 327.7 Z" fill="#F0703A" />
<text x="770" y="325" font-size="11.5" fill="#333" textLength="113" lengthAdjust="spacing" >Microsoft Office Home</text>
<rect x="927.5" y="315" width="9.5" height="11.5" fill="#2A93DD" />
<path d="M927.5 315 H937 V320 L932.3 323 L927.5 320 Z" fill="#5CB8EE" />
<rect x="922.5" y="317" width="8.5" height="8.5" fill="#0F6CBD" rx="1" />
<circle cx="926.7" cy="321.3" r="2.2" fill="none" stroke="#fff" stroke-width="1.2" />
<text x="944.3" y="325" font-size="11.5" fill="#333" textLength="137.7" lengthAdjust="spacing" >Mail - Orla Nelmes - Outloc</text>
<rect x="1097.5" y="314.5" width="13.8" height="13" fill="#1F3550" />
<text x="1100.6" y="325.5" font-size="11.5" fill="#fff" font-weight="700" >S</text>
<text x="1119.5" y="325" font-size="11.5" fill="#333" textLength="136.8" lengthAdjust="spacing" >Satchel One | Learning platf</text>
<path d="M1281.5 316 C1277.5 313.5 1274 316.5 1274.5 320.5 C1275 324 1277.5 326.5 1280 326.8 M1280.5 318.5 C1278.5 317.5 1277 319 1277.5 320.8 C1278 322.5 1280.5 322.5 1281 320.8" fill="none" stroke="#7B6FD0" stroke-width="1.6" />
<text x="1294.3" y="325" font-size="11.5" fill="#222" textLength="82" lengthAdjust="spacing" >Different by One</text>
<path d="M1420.7 316.3 L1429.3 325 M1429.3 316.3 L1420.7 325" fill="none" stroke="#333" stroke-width="1" />
<path d="M1448.7 321.5 H1459.7 M1454.2 316 V327" fill="none" stroke="#222" stroke-width="1.1" />
<path d="M1476.3 319 L1481.9 324.5 L1487.5 319" fill="none" stroke="#333" stroke-width="1" />
<line x1="1592.5" y1="321.5" x2="1601.7" y2="321.5" stroke="#222" stroke-width="1.1" />
<path d="M1632.5 318.3 H1639.7 V325.2 H1632.5 Z M1634.5 318 V316.5 H1641.5 V323.3 H1640" fill="none" stroke="#222" stroke-width="1.1" />
<path d="M1672.3 316.7 L1681.5 325.2 M1681.5 316.7 L1672.3 325.2" fill="none" stroke="#222" stroke-width="1.2" />
<rect x="509.5" y="334.7" width="1187.5" height="34.8" fill="#F2F2F2" />
<line x1="509.5" y1="370" x2="1697" y2="370" stroke="#E2E2E2" stroke-width="1" />
<path d="M521.5 352.5 H534.3 M527.2 346.7 L521.5 352.5 L527.2 358.3" fill="none" stroke="#222" stroke-width="1.2" />
<path d="M555.5 352.5 H569 M563.3 346.7 L569 352.5 L563.3 358.3" fill="none" stroke="#A6A6A6" stroke-width="1.2" />
<path d="M598.5 347.2 A5.9 5.9 0 1 1 593.3 348.2 M593 345.3 L593.3 348.6 L596.5 348.2" fill="none" stroke="#222" stroke-width="1.1" />
<path d="M625.3 352.5 L631.5 346.5 L637.7 352.5 M626.8 351.2 V358.5 H630 V354.3 H633 V358.5 H636.2 V351.2" fill="none" stroke="#111" stroke-width="1.2" />
<rect x="663.5" y="338.8" width="880" height="26.6" fill="#fff" stroke="#D9D9D9" stroke-width="1" />
<rect x="672.7" y="351.7" width="8" height="6.2" fill="none" stroke="#9A9A9A" stroke-width="1.1" />
<path d="M674.3 351.7 V349.7 C674.3 346.5 679.1 346.5 679.1 349.7 V351.7" fill="none" stroke="#9A9A9A" stroke-width="1.1" />
<line x1="690.5" y1="342.5" x2="690.5" y2="362.5" stroke="#D0D0D0" stroke-width="1" />
<text x="695.5" y="356.3" font-size="12" fill="#767676" textLength="28.9" lengthAdjust="spacing" >https:</text>
<text x="724.6" y="356.3" font-size="12" fill="#767676" textLength="6.4" lengthAdjust="spacing" >//</text>
<text x="731.3" y="356.3" font-size="12" fill="#222" textLength="78" lengthAdjust="spacing" >nrich.maths.org</text>
<text x="809.5" y="356.3" font-size="12" fill="#767676" textLength="28.5" lengthAdjust="spacing" >/4339</text>
<path d="M1497.5 348.6 V358.5 M1491.4 348 C1493.5 347.3 1496 347.5 1497.5 348.6 C1499 347.5 1501.5 347.3 1503.6 348 V358.5 H1491.4 Z M1491.4 357 H1503.6" fill="none" stroke="#111" stroke-width="1.1" />
<path d="M1525.80 346.60 L1527.43 350.96 L1532.08 351.16 L1528.44 354.06 L1529.68 358.54 L1525.80 355.97 L1521.92 358.54 L1523.16 354.06 L1519.52 351.16 L1524.17 350.96 Z" fill="none" stroke="#111" stroke-width="1.1" stroke-linejoin="miter"/>
<path d="M1574.30 346.70 L1575.90 350.99 L1580.48 351.19 L1576.90 354.04 L1578.12 358.46 L1574.30 355.93 L1570.48 358.46 L1571.70 354.04 L1568.12 351.19 L1572.70 350.99 Z" fill="none" stroke="#111" stroke-width="1.1" stroke-linejoin="miter"/>
<rect x="1576.6" y="348.6" width="6.5" height="9.6" fill="#F2F2F2" />
<path d="M1576.8 350.1 H1582.3 M1577.3 353.3 H1582.3 M1576.8 356.4 H1582.3" fill="none" stroke="#111" stroke-width="1.1" />
<path d="M1609.6 346.3 L1612 347.6 L1606.6 357 L1604.3 358.3 L1604.6 355.6 Z M1606.6 357 C1609 354.3 1611.2 354.8 1611.6 356.8 C1612 358.8 1615 358.2 1617.2 356.6" fill="none" stroke="#111" stroke-width="1" stroke-linejoin="round"/>
<path d="M1640.5 351 H1638 V358 H1649 V355.5 M1641.5 355.5 C1641.5 351 1644.5 349.3 1647 349.3 V346.5 L1651 350.7 L1647 354.8 V352 C1644.5 352 1642.5 353 1641.5 355.5 Z" fill="none" stroke="#111" stroke-width="1.1" stroke-linejoin="round"/>
<circle cx="1674" cy="352" r="0.9" fill="#222" />
<circle cx="1679.5" cy="352" r="0.9" fill="#222" />
<circle cx="1685" cy="352" r="0.9" fill="#222" />
<g clip-path="url(#pageclip)">
<rect x="707" y="366" width="26.3" height="19.8" fill="#8C4A52" stroke="#777733" stroke-width="1.3" rx="1.5" />
<path d="M715 370 L728 384 M711 383.5 H731" fill="none" stroke="#5F2F36" stroke-width="0.8" />
<text x="740" y="369.2" font-size="13.2" fill="#0F3C8A" font-family="'DejaVu Sans','Liberation Sans',sans-serif" font-weight="700" >Hypotenuse</text>
<text x="740" y="385.7" font-size="13.2" fill="#0F3C8A" font-family="'DejaVu Sans','Liberation Sans',sans-serif" font-weight="700" textLength="93.7" lengthAdjust="spacing" >Lattice Points</text>
<text x="705.5" y="409.5" font-size="10.6" fill="#222" font-family="'DejaVu Sans','Liberation Sans',sans-serif" textLength="159" lengthAdjust="spacing" >The triangle OMN has vertices</text>
<text x="705.5" y="422.2" font-size="10.6" fill="#222" font-family="'DejaVu Sans','Liberation Sans',sans-serif" textLength="122" lengthAdjust="spacing" >on the axes with whole</text>
<text x="705.5" y="434.7" font-size="10.6" fill="#222" font-family="'DejaVu Sans','Liberation Sans',sans-serif" textLength="140.8" lengthAdjust="spacing" >number co-ordinates. How</text>
<text x="705.5" y="447.7" font-size="10.6" fill="#222" font-family="'DejaVu Sans','Liberation Sans',sans-serif" textLength="125.8" lengthAdjust="spacing" >many points with whole</text>
<text x="705.5" y="460.6" font-size="10.6" fill="#222" font-family="'DejaVu Sans','Liberation Sans',sans-serif" textLength="157.8" lengthAdjust="spacing" >number coordinates are there</text>
<text x="705.5" y="473.3" font-size="10.6" fill="#222" font-family="'DejaVu Sans','Liberation Sans',sans-serif" textLength="125" lengthAdjust="spacing" >on the hypotenuse MN?</text>
<line x1="887.5" y1="370" x2="887.5" y2="939" stroke="#E4E4E4" stroke-width="1" />
<text x="901.3" y="380.5" font-size="13.2" fill="#222" font-family="'DejaVu Sans','Liberation Sans',sans-serif" stroke="#222" stroke-width=".3" textLength="28" lengthAdjust="spacing" >one.</text>
<rect x="1683.3" y="370.5" width="13.7" height="568.5" fill="#E9E9E9" />
<rect x="1683.3" y="571" width="13.7" height="172.3" fill="#BDBDBD" />
<path d="M1686.5 379.3 L1689.9 375.8 L1693.3 379.3" fill="none" stroke="#A0A0A0" stroke-width="1" />
<path d="M1686.5 929.8 L1689.9 933.3 L1693.3 929.8" fill="none" stroke="#A0A0A0" stroke-width="1" />
</g>
<rect x="900" y="416.3" width="609" height="37.5" fill="url(#dots)" />
<text x="1116.3" y="437.5" font-size="18.2" fill="#fff" font-family="'DejaVu Sans','Liberation Sans',sans-serif" stroke="#fff" stroke-width=".3" textLength="160" lengthAdjust="spacing" >Different By One</text>
<path d="M1492.31 431.98 L1496.26 432.06 L1496.26 438.34 L1492.31 438.42 L1491.54 440.29 L1494.27 443.14 L1489.84 447.57 L1486.99 444.84 L1485.12 445.61 L1485.04 449.56 L1478.76 449.56 L1478.68 445.61 L1476.81 444.84 L1473.96 447.57 L1469.53 443.14 L1472.26 440.29 L1471.49 438.42 L1467.54 438.34 L1467.54 432.06 L1471.49 431.98 L1472.26 430.11 L1469.53 427.26 L1473.96 422.83 L1476.81 425.56 L1478.68 424.79 L1478.76 420.84 L1485.04 420.84 L1485.12 424.79 L1486.99 425.56 L1489.84 422.83 L1494.27 427.26 L1491.54 430.11 Z M1488.8000000000002 435.2 A6.9 6.9 0 1 0 1475.0 435.2 A6.9 6.9 0 1 0 1488.8000000000002 435.2 Z" fill="#B466DA" stroke="#B466DA" stroke-width="1.4" fill-rule="evenodd" stroke-linejoin="round"/>
<rect x="900" y="453.5" width="570.3" height="364.5" fill="#DCDCDC" />
<rect x="1470.3" y="453.5" width="38.6" height="364.5" fill="#80826F" />
<line x1="1508.6" y1="453.5" x2="1508.6" y2="818" stroke="#4A4A44" stroke-width="1" />
<text x="1478.3" y="470" font-size="12.3" fill="#fff" font-family="'DejaVu Sans','Liberation Sans',sans-serif" stroke="#fff" stroke-width=".3" textLength="23.4" lengthAdjust="spacing" >Add</text>
<text x="1477" y="484.5" font-size="12.3" fill="#fff" font-family="'DejaVu Sans','Liberation Sans',sans-serif" stroke="#fff" stroke-width=".3" textLength="26" lengthAdjust="spacing" >rods</text>
<circle cx="1490.5" cy="506.8" r="11.8" fill="#FFFFFF" stroke="#E4E4E4" stroke-width="1" />
<circle cx="1490.5" cy="534.57" r="11.8" fill="#FA1414" stroke="#FF3030" stroke-width="1" />
<circle cx="1490.5" cy="562.34" r="11.8" fill="#99DD55" stroke="#A5E566" stroke-width="1" />
<circle cx="1490.5" cy="590.11" r="11.8" fill="#FAA7B8" stroke="#FBB5C4" stroke-width="1" />
<circle cx="1490.5" cy="617.88" r="11.8" fill="#F0EB0A" stroke="#F4F040" stroke-width="1" />
<circle cx="1490.5" cy="645.65" r="11.8" fill="#216B5B" stroke="#2A7868" stroke-width="1" />
<circle cx="1490.5" cy="673.42" r="11.8" fill="#111111" stroke="#222" stroke-width="1" />
<circle cx="1490.5" cy="701.19" r="11.8" fill="#6B4636" stroke="#7A5444" stroke-width="1" />
<circle cx="1490.5" cy="728.96" r="11.8" fill="#4563FF" stroke="#5C77FF" stroke-width="1" />
<circle cx="1490.5" cy="756.73" r="11.8" fill="#DD5500" stroke="#F07A20" stroke-width="1" />
<rect x="1472.2" y="772.2" width="36.2" height="42.4" fill="#5E676B" />
<path d="M1477.5 782.5 H1502.5 L1500 810 H1480 Z" fill="#D2D2D2" />
<path d="M1476.7 779.5 H1503.3 V782.5 H1476.7 Z" fill="#D2D2D2" />
<path d="M1485.5 779.5 L1486.5 776 H1493.5 L1494.5 779.5" fill="none" stroke="#D2D2D2" stroke-width="1.5" />
<line x1="1483" y1="785" x2="1483.8" y2="807.5" stroke="#5E676B" stroke-width="1.4" />
<line x1="1487.3" y1="785" x2="1487.6" y2="807.5" stroke="#5E676B" stroke-width="1.4" />
<line x1="1492.7" y1="785" x2="1492.4" y2="807.5" stroke="#5E676B" stroke-width="1.4" />
<line x1="1497" y1="785" x2="1496.2" y2="807.5" stroke="#5E676B" stroke-width="1.4" />
<rect x="1100.7" y="479" width="198" height="39.3" fill="#808080" />
<text x="1110.7" y="491.3" font-size="12.6" fill="#1A1A1A" font-family="'DejaVu Sans','Liberation Sans',sans-serif" stroke="#1A1A1A" stroke-width=".3" textLength="178" lengthAdjust="spacing" >Using only two colours, make</text>
<text x="1113" y="505" font-size="12.6" fill="#1A1A1A" font-family="'DejaVu Sans','Liberation Sans',sans-serif" stroke="#1A1A1A" stroke-width=".3" textLength="173.3" lengthAdjust="spacing" >two lines which differ by one</text>
<rect x="1391.5" y="479.3" width="12.4" height="12.4" fill="#FFFFFF" stroke="#DCDCDC" stroke-width="0.8" />
<rect x="1391.5" y="492.5" width="25.6" height="12.4" fill="#FA1414" stroke="#E01010" stroke-width="0.8" />
<rect x="955.9" y="518.9" width="118" height="12.4" fill="#4563FF" stroke="#6C84FF" stroke-width="0.8" />
<rect x="1074.7" y="518.9" width="118" height="12.4" fill="#4563FF" stroke="#6C84FF" stroke-width="0.8" />
<rect x="1193.5" y="518.9" width="118" height="12.4" fill="#4563FF" stroke="#6C84FF" stroke-width="0.8" />
<rect x="1312.3" y="518.9" width="118" height="12.4" fill="#4563FF" stroke="#6C84FF" stroke-width="0.8" />
<rect x="955.9" y="532.1" width="91.6" height="12.4" fill="#111111" stroke="#333333" stroke-width="0.8" />
<rect x="1048.3" y="532.1" width="91.6" height="12.4" fill="#111111" stroke="#333333" stroke-width="0.8" />
<rect x="1140.7" y="532.1" width="91.6" height="12.4" fill="#111111" stroke="#333333" stroke-width="0.8" />
<rect x="1233.1" y="532.1" width="91.6" height="12.4" fill="#111111" stroke="#333333" stroke-width="0.8" />
<rect x="1325.5" y="532.1" width="91.6" height="12.4" fill="#111111" stroke="#333333" stroke-width="0.8" />
<rect x="955.9" y="558.5" width="52" height="12.4" fill="#FAA7B8" stroke="#E58FA3" stroke-width="0.8" />
<rect x="955.9" y="571.7" width="65.2" height="12.4" fill="#F0EB0A" stroke="#CFCB00" stroke-width="0.8" />
<rect x="1101.1" y="558.5" width="38.8" height="12.4" fill="#99DD55" stroke="#88C74A" stroke-width="0.8" />
<rect x="1101.1" y="571.7" width="25.6" height="12.4" fill="#FA1414" stroke="#E01010" stroke-width="0.8" />
<rect x="1206.7" y="558.5" width="12.4" height="12.4" fill="#FFFFFF" stroke="#DCDCDC" stroke-width="0.8" />
<rect x="1219.9" y="558.5" width="12.4" height="12.4" fill="#FFFFFF" stroke="#DCDCDC" stroke-width="0.8" />
<rect x="1206.7" y="571.7" width="38.8" height="12.4" fill="#99DD55" stroke="#88C74A" stroke-width="0.8" />
<rect x="1285.9" y="571.7" width="65.2" height="12.4" fill="#F0EB0A" stroke="#CFCB00" stroke-width="0.8" />
<rect x="1351.9" y="571.7" width="65.2" height="12.4" fill="#F0EB0A" stroke="#CFCB00" stroke-width="0.8" />
<rect x="1285.9" y="584.9" width="38.8" height="12.4" fill="#99DD55" stroke="#88C74A" stroke-width="0.8" />
<rect x="1325.5" y="584.9" width="38.8" height="12.4" fill="#99DD55" stroke="#88C74A" stroke-width="0.8" />
<rect x="1365.1" y="584.9" width="38.8" height="12.4" fill="#99DD55" stroke="#88C74A" stroke-width="0.8" />
<rect x="955.9" y="611.3" width="78.4" height="12.4" fill="#216B5B" stroke="#1C5B4D" stroke-width="0.8" />
<rect x="955.9" y="624.5" width="65.2" height="12.4" fill="#F0EB0A" stroke="#CFCB00" stroke-width="0.8" />
<rect x="1087.9" y="611.3" width="65.2" height="12.4" fill="#F0EB0A" stroke="#CFCB00" stroke-width="0.8" />
<rect x="1153.9" y="611.3" width="65.2" height="12.4" fill="#F0EB0A" stroke="#CFCB00" stroke-width="0.8" />
<rect x="1219.9" y="611.3" width="65.2" height="12.4" fill="#F0EB0A" stroke="#CFCB00" stroke-width="0.8" />
<rect x="1285.9" y="611.3" width="65.2" height="12.4" fill="#F0EB0A" stroke="#CFCB00" stroke-width="0.8" />
<rect x="1087.9" y="624.5" width="91.6" height="12.4" fill="#111111" stroke="#333333" stroke-width="0.8" />
<rect x="1180.3" y="624.5" width="91.6" height="12.4" fill="#111111" stroke="#333333" stroke-width="0.8" />
<rect x="1272.7" y="624.5" width="91.6" height="12.4" fill="#111111" stroke="#333333" stroke-width="0.8" />
<rect x="1338.7" y="650.9" width="91.6" height="12.4" fill="#111111" stroke="#333333" stroke-width="0.8" />
<rect x="1351.9" y="664.1" width="78.4" height="12.4" fill="#216B5B" stroke="#1C5B4D" stroke-width="0.8" />
<rect x="1048.3" y="664.1" width="12.4" height="12.4" fill="#FFFFFF" stroke="#DCDCDC" stroke-width="0.8" />
<rect x="1061.5" y="664.1" width="12.4" height="12.4" fill="#FFFFFF" stroke="#DCDCDC" stroke-width="0.8" />
<rect x="1074.7" y="664.1" width="12.4" height="12.4" fill="#FFFFFF" stroke="#DCDCDC" stroke-width="0.8" />
<rect x="1048.3" y="677.3" width="52" height="12.4" fill="#FAA7B8" stroke="#E58FA3" stroke-width="0.8" />
<rect x="1219.9" y="664.1" width="38.8" height="12.4" fill="#99DD55" stroke="#88C74A" stroke-width="0.8" />
<rect x="1219.9" y="677.3" width="52" height="12.4" fill="#FAA7B8" stroke="#E58FA3" stroke-width="0.8" />
<rect x="1299.1" y="703.7" width="131.2" height="12.4" fill="#DD5500" stroke="#F07A20" stroke-width="0.8" />
<rect x="1299.1" y="716.9" width="12.4" height="12.4" fill="#FFFFFF" stroke="#DCDCDC" stroke-width="0.8" />
<rect x="1312.3" y="716.9" width="12.4" height="12.4" fill="#FFFFFF" stroke="#DCDCDC" stroke-width="0.8" />
<rect x="1325.5" y="716.9" width="12.4" height="12.4" fill="#FFFFFF" stroke="#DCDCDC" stroke-width="0.8" />
<rect x="1338.7" y="716.9" width="12.4" height="12.4" fill="#FFFFFF" stroke="#DCDCDC" stroke-width="0.8" />
<rect x="1351.9" y="716.9" width="12.4" height="12.4" fill="#FFFFFF" stroke="#DCDCDC" stroke-width="0.8" />
<rect x="1365.1" y="716.9" width="12.4" height="12.4" fill="#FFFFFF" stroke="#DCDCDC" stroke-width="0.8" />
<rect x="1378.3" y="716.9" width="12.4" height="12.4" fill="#FFFFFF" stroke="#DCDCDC" stroke-width="0.8" />
<rect x="1391.5" y="716.9" width="12.4" height="12.4" fill="#FFFFFF" stroke="#DCDCDC" stroke-width="0.8" />
<rect x="1404.7" y="716.9" width="12.4" height="12.4" fill="#FFFFFF" stroke="#DCDCDC" stroke-width="0.8" />
<rect x="955.9" y="716.9" width="78.4" height="12.4" fill="#216B5B" stroke="#1C5B4D" stroke-width="0.8" />
<rect x="955.9" y="730.1" width="12.4" height="12.4" fill="#FFFFFF" stroke="#DCDCDC" stroke-width="0.8" />
<rect x="969.1" y="730.1" width="12.4" height="12.4" fill="#FFFFFF" stroke="#DCDCDC" stroke-width="0.8" />
<rect x="982.3" y="730.1" width="12.4" height="12.4" fill="#FFFFFF" stroke="#DCDCDC" stroke-width="0.8" />
<rect x="995.5" y="730.1" width="12.4" height="12.4" fill="#FFFFFF" stroke="#DCDCDC" stroke-width="0.8" />
<rect x="1008.7" y="730.1" width="12.4" height="12.4" fill="#FFFFFF" stroke="#DCDCDC" stroke-width="0.8" />
<rect x="1127.5" y="716.9" width="12.4" height="12.4" fill="#FFFFFF" stroke="#DCDCDC" stroke-width="0.8" />
<rect x="1140.7" y="716.9" width="12.4" height="12.4" fill="#FFFFFF" stroke="#DCDCDC" stroke-width="0.8" />
<rect x="1153.9" y="716.9" width="12.4" height="12.4" fill="#FFFFFF" stroke="#DCDCDC" stroke-width="0.8" />
<rect x="1167.1" y="716.9" width="12.4" height="12.4" fill="#FFFFFF" stroke="#DCDCDC" stroke-width="0.8" />
<rect x="1127.5" y="730.1" width="65.2" height="12.4" fill="#F0EB0A" stroke="#CFCB00" stroke-width="0.8" />
<path d="M1397 818 V793 H1444.2 L1457.7 803.8 V818 Z" fill="#BFE1F2" />
<text x="1408.4" y="812" font-size="17" fill="#111" font-family="'DejaVu Sans','Liberation Sans',sans-serif" stroke="#111" stroke-width=".3" textLength="38.4" lengthAdjust="spacing" >Hide</text>
<rect x="901.5" y="818.5" width="608.7" height="118" fill="#E4F0FB" stroke="#111" stroke-width="1.1" />
<path d="M919 827 H1013 Q1018 827.3 1021 829.6 H1108 Q1111 827.3 1116 827 H1206 Q1218 827 1218 839 V918 Q1218 929.8 1206 929.8 H1116 Q1111 929.6 1108 928.3 H1021 Q1018 929.6 1013 929.8 H919 Q907 929.8 907 918 V839 Q907 827 919 827 Z" fill="#595959" />
<rect x="1024.1" y="833" width="87.3" height="86.8" fill="#B4AFE2" />
<circle cx="962.7" cy="849.9" r="13.7" fill="#626262" />
<path transform="translate(962.7 849.9) rotate(0)" d="M0 -10.9 L10.9 0.9 H2.2 V11.1 H-2.2 V0.9 H-10.9 Z" fill="#B569CF"/>
<circle cx="990.3" cy="879" r="13.7" fill="#626262" />
<path transform="translate(990.3 879) rotate(90)" d="M0 -10.9 L10.9 0.9 H2.2 V11.1 H-2.2 V0.9 H-10.9 Z" fill="#B569CF"/>
<circle cx="962.7" cy="906.8" r="13.7" fill="#626262" />
<path transform="translate(962.7 906.8) rotate(180)" d="M0 -10.9 L10.9 0.9 H2.2 V11.1 H-2.2 V0.9 H-10.9 Z" fill="#B569CF"/>
<circle cx="935" cy="879" r="13.7" fill="#626262" />
<path transform="translate(935 879) rotate(270)" d="M0 -10.9 L10.9 0.9 H2.2 V11.1 H-2.2 V0.9 H-10.9 Z" fill="#B569CF"/>
<circle cx="1166.8" cy="866.2" r="17.2" fill="#626262" />
<path d="M1162.5 859.8 C1170.5 859.5 1174.2 865 1174.5 872.5" fill="none" stroke="#B569CF" stroke-width="3.6" />
<path d="M1154.7 858 L1163.2 851.8 L1165.4 864.3 Z M1168 871.8 L1180.6 870.2 L1174.3 880.2 Z" fill="#B569CF" />
<text x="1138" y="907.5" font-size="17" fill="#D6A6EC" font-family="'DejaVu Sans','Liberation Sans',sans-serif" stroke="#D6A6EC" stroke-width=".3" textLength="55" lengthAdjust="spacing" >Rotate</text>
<rect x="1224" y="824.5" width="53.8" height="107.3" fill="#A2C4D3" rx="2" />
<rect x="1281.8" y="824.5" width="53.5" height="107.3" fill="#A2C4D3" rx="2" />
<rect x="1338.9" y="824.5" width="53.8" height="107.3" fill="#A2C4D3" rx="2" />
<rect x="1396.3" y="824.5" width="53.5" height="107.3" fill="#A2C4D3" rx="2" />
<rect x="1453.8" y="824.5" width="53.7" height="107.3" fill="#A2C4D3" rx="2" />
<rect x="1232.9" y="828.5" width="38.4" height="37.1" fill="#A673B5" />
<rect x="1232.9" y="872.8" width="38.4" height="38.1" fill="#A673B5" />
<text x="1233.2" y="852.5" font-size="15.3" fill="#fff" font-family="'DejaVu Sans','Liberation Sans',sans-serif" stroke="#fff" stroke-width=".3" textLength="38.1" lengthAdjust="spacing" >Save</text>
<text x="1233.5" y="897.5" font-size="15.3" fill="#fff" font-family="'DejaVu Sans','Liberation Sans',sans-serif" stroke="#fff" stroke-width=".3" textLength="37.5" lengthAdjust="spacing" >Load</text>
<rect x="1290.9" y="828.5" width="35.6" height="36.5" fill="#A673B5" stroke="#9A68AA" stroke-width="1.2" />
<rect x="1290.9" y="872.8" width="35.6" height="35.5" fill="#A673B5" stroke="#7FE3FF" stroke-width="1.7" />
<text x="1297.9" y="853.5" font-size="16" fill="#fff" font-family="'DejaVu Sans','Liberation Sans',sans-serif" stroke="#fff" stroke-width=".3" textLength="21" lengthAdjust="spacing" >on</text>
<text x="1297.2" y="897.5" font-size="16" fill="#fff" font-family="'DejaVu Sans','Liberation Sans',sans-serif" stroke="#fff" stroke-width=".3" textLength="23" lengthAdjust="spacing" >off</text>
<rect x="1348.3" y="828.5" width="35.6" height="36.5" fill="#A673B5" stroke="#9A68AA" stroke-width="1.2" />
<rect x="1348.3" y="872.8" width="35.6" height="35.5" fill="#A673B5" stroke="#7FE3FF" stroke-width="1.7" />
<text x="1355.3" y="853.5" font-size="16" fill="#fff" font-family="'DejaVu Sans','Liberation Sans',sans-serif" stroke="#fff" stroke-width=".3" textLength="21" lengthAdjust="spacing" >on</text>
<text x="1354.6" y="897.5" font-size="16" fill="#fff" font-family="'DejaVu Sans','Liberation Sans',sans-serif" stroke="#fff" stroke-width=".3" textLength="23" lengthAdjust="spacing" >off</text>
<rect x="1405.2" y="827.9" width="36.4" height="36.7" fill="#A673B5" />
<rect x="1405.2" y="871.5" width="36.4" height="36.8" fill="#A673B5" />
<text x="1423.3" y="851.5" font-size="16" fill="#fff" font-family="'DejaVu Sans','Liberation Sans',sans-serif" stroke="#fff" stroke-width=".3" text-anchor="middle" >+</text>
<text x="1423.3" y="893.5" font-size="16" fill="#fff" font-family="'DejaVu Sans','Liberation Sans',sans-serif" stroke="#fff" stroke-width=".3" text-anchor="middle" >-</text>
<rect x="1460.7" y="854" width="41.7" height="41.6" fill="#A673B5" />
<text x="1461.3" y="870" font-size="15.3" fill="#fff" font-family="'DejaVu Sans','Liberation Sans',sans-serif" stroke="#fff" stroke-width=".3" textLength="40.9" lengthAdjust="spacing" >Clear</text>
<text x="1464.9" y="888.6" font-size="15.3" fill="#fff" font-family="'DejaVu Sans','Liberation Sans',sans-serif" stroke="#fff" stroke-width=".3" textLength="33.8" lengthAdjust="spacing" >rods</text>
<text x="1234.5" y="928.6" font-size="15.3" fill="#2A1840" font-family="'DejaVu Sans','Liberation Sans',sans-serif" stroke="#2A1840" stroke-width=".3" textLength="26.3" lengthAdjust="spacing" >File</text>
<text x="1292.3" y="928.6" font-size="15.3" fill="#2A1840" font-family="'DejaVu Sans','Liberation Sans',sans-serif" stroke="#2A1840" stroke-width=".3" textLength="31.8" lengthAdjust="spacing" >Grid</text>
<text x="1341.5" y="928.6" font-size="15.3" fill="#2A1840" font-family="'DejaVu Sans','Liberation Sans',sans-serif" stroke="#2A1840" stroke-width=".3" textLength="48.9" lengthAdjust="spacing" >Labels</text>
<text x="1401.2" y="928.6" font-size="15.3" fill="#2A1840" font-family="'DejaVu Sans','Liberation Sans',sans-serif" stroke="#2A1840" stroke-width=".3" textLength="43.3" lengthAdjust="spacing" >Zoom</text>
<rect x="509.5" y="939" width="1187.5" height="34.7" fill="#272B37" />
<rect x="850.5" y="939" width="420" height="34.700000000000045" fill="url(#tkgrad)"/>
<rect x="1480" y="939" width="217" height="34.7" fill="#343150" />
<rect x="1380" y="939" width="100" height="34.700000000000045" fill="url(#tkgrad2)"/>
<rect x="509.5" y="939" width="42" height="34.7" fill="#2E2B52" />
<rect x="524" y="950.2" width="5.6" height="5.8" fill="#fff" />
<rect x="530.6" y="949.3" width="7.6" height="6.7" fill="#fff" />
<rect x="524" y="957" width="5.6" height="5.8" fill="#fff" />
<rect x="530.6" y="957" width="7.6" height="6.7" fill="#fff" />
<rect x="551.5" y="939" width="299" height="34.7" fill="#F2F2F2" />
<circle cx="571.5" cy="953.5" r="4.3" fill="none" stroke="#333" stroke-width="1.2" />
<line x1="568.3" y1="956.8" x2="562.8" y2="962.5" stroke="#333" stroke-width="1.3" />
<text x="587" y="961.3" font-size="12.5" fill="#444" textLength="110.5" lengthAdjust="spacing" >Type here to search</text>
<circle cx="871.3" cy="957" r="6.2" fill="none" stroke="#fff" stroke-width="2" />
<path d="M907.8 950.7 H916.6 V962 H907.8 Z M905.3 950.7 H907.8 M905.3 962 H907.8 M919.6 950.2 V953.2 M919.6 955.3 V962.5" fill="none" stroke="#fff" stroke-width="1.3" />
<rect x="936.6" y="939" width="41.5" height="34.7" fill="#56565E" />
<rect x="936.6" y="972" width="41.5" height="1.8" fill="#A79DF0" />
<path d="M948.3 957.5 C948.5 951 953 947.5 958 947.5 C964 947.5 967 952 966.5 958.5 H953.5 C954 962 957.5 963.5 961 963 C963 962.8 964.5 962.2 965.7 961.3 V965 C963.5 966.3 961 966.8 958.5 966.7 C952 966.5 948 962.5 948.3 957.5 Z M953.5 955 H961.5 C961.3 952.5 959.8 951 957.5 951 C955.3 951 953.8 952.8 953.5 955 Z" fill="#1E88E5" />
<path d="M990.7 949 H997 L998.5 950.5 H1009.3 V964.5 H990.7 Z" fill="#F5B731" />
<rect x="990.7" y="953" width="18.6" height="11.5" fill="#FFD45E" />
<rect x="995" y="958.5" width="10" height="6" fill="#3A8FD9" />
<rect x="997" y="960.5" width="6" height="4" fill="#F5F5F5" />
<rect x="1038" y="947.5" width="15" height="18.5" fill="#2B7CD3" />
<rect x="1038" y="947.5" width="15" height="6" fill="#41A5EE" />
<rect x="1038" y="960" width="15" height="6" fill="#185ABD" />
<rect x="1032" y="951.5" width="11.5" height="11.5" fill="#185ABD" rx="1" />
<text x="1033.6" y="961" font-size="8.5" fill="#fff" font-weight="700" >W</text>
<path d="M1080 951 C1080 946.5 1089 946.5 1089 951" fill="none" stroke="#EEE" stroke-width="1.3" />
<rect x="1075.5" y="951" width="18.5" height="15" fill="#F2F2F2" />
<rect x="1080" y="954" width="4.5" height="4.5" fill="#F25022" />
<rect x="1085.5" y="954" width="4.5" height="4.5" fill="#7FBA00" />
<rect x="1080" y="959.5" width="4.5" height="4.5" fill="#00A4EF" />
<rect x="1085.5" y="959.5" width="4.5" height="4.5" fill="#FFB900" />
<path d="M1118 953.5 L1128 947.5 L1138 953.5 V965.5 H1118 Z" fill="#1A6FC9" />
<path d="M1118 954 L1128 960 L1138 954 V965.5 H1118 Z" fill="#3AA0F0" />
<path d="M1119.3 953.6 H1136.7 L1128 960.2 Z" fill="#F4F8FB" />
<path d="M1118 965.5 L1128 958.8 L1138 965.5 Z" fill="#4FB3F6" />
<path d="M1161.5 949 L1170.5 952.5 L1179.5 949 V961 L1170.5 967 L1161.5 961 Z M1165.5 954.5 V959.5 L1170.5 962.8 L1175.5 959.5 V954.5 L1170.5 956.5 Z" fill="#C8232C" fill-rule="evenodd"/>
<circle cx="1214.5" cy="957" r="9.3" fill="#E8623A" />
<path d="M1214.5 947.7 A9.3 9.3 0 0 1 1223.8 957 H1214.5 Z" fill="#F59B78" />
<rect x="1203.5" y="951.3" width="11.3" height="11.3" fill="#C43E1C" rx="1" />
<text x="1206.3" y="960.7" font-size="8.8" fill="#fff" font-weight="700" >P</text>
<rect x="1435" y="948.5" width="42" height="16.3" fill="#000" stroke="#fff" stroke-width="1.6" />
<rect x="1477.5" y="953" width="2.2" height="7.5" fill="#fff" />
<rect x="1436.3" y="949.8" width="12.5" height="13.7" fill="#16A34A" />
<text x="1444.7" y="962" font-size="12.8" fill="#fff" textLength="23" lengthAdjust="spacing" >31%</text>
<path d="M1502 959.7 L1506.8 954.8 L1511.6 959.7" fill="none" stroke="#fff" stroke-width="1.3" />
<path d="M1524 962 A9.5 9.5 0 0 1 1533 952.5 M1527 962 A6.5 6.5 0 0 1 1533 955.7 M1530 962 A3.3 3.3 0 0 1 1533 958.8" fill="none" stroke="#D8D8E0" stroke-width="1" />
<circle cx="1532.3" cy="961.5" r="1" fill="#fff" />
<path d="M1541.3 955.3 H1543.7 L1547 952.3 V962 L1543.7 959 H1541.3 Z" fill="none" stroke="#fff" stroke-width="1" />
<path d="M1549.2 954.8 C1550.4 956.2 1550.4 958.2 1549.2 959.5 M1551.3 953 C1553.4 955.3 1553.4 959 1551.3 961.3 M1553.4 951.3 C1556.2 954.3 1556.2 960 1553.4 963" fill="none" stroke="#D8D8E0" stroke-width="0.9" />
<text x="1564.5" y="960" font-size="10" fill="#fff" textLength="19.7" lengthAdjust="spacing" >ENG</text>
<text x="1608" y="951.8" font-size="10.8" fill="#fff" textLength="23.6" lengthAdjust="spacing" >08:43</text>
<text x="1595" y="968" font-size="10.8" fill="#fff" textLength="51" lengthAdjust="spacing" >08/07/2020</text>
<path d="M1661 949.7 H1674.5 V959.5 H1669 L1666 962.3 V959.5 H1661 Z" fill="#fff" />
<line x1="1663" y1="952.3" x2="1672.5" y2="952.3" stroke="#2E2B50" stroke-width="0.9" />
<line x1="1663" y1="954.7" x2="1672.5" y2="954.7" stroke="#2E2B50" stroke-width="0.9" />
<line x1="1663" y1="957.1" x2="1672.5" y2="957.1" stroke="#2E2B50" stroke-width="0.9" />
<circle cx="1675.2" cy="963.1" r="6.3" fill="#22212E" stroke="#5A5872" stroke-width="1" />
<text x="1675.2" y="966.8" font-size="9.6" fill="#fff" text-anchor="middle" >1</text>
<line x1="1691.5" y1="939" x2="1691.5" y2="973.7" stroke="#6E6C88" stroke-width="1" />
</g>
<g id="slide">
<rect x="509.5" y="306" width="1187.5" height="668" fill="#fff" />
<rect x="509.5" y="306" width="1187.5" height="28.7" fill="url(#tabgrad)" />
<line x1="565.7" y1="308" x2="565.7" y2="334" stroke="#A9A7C2" stroke-width="1" />
<line x1="740.5" y1="308" x2="740.5" y2="334" stroke="#A9A7C2" stroke-width="1" />
<line x1="915" y1="308" x2="915" y2="334" stroke="#A9A7C2" stroke-width="1" />
<line x1="1089.5" y1="308" x2="1089.5" y2="334" stroke="#A9A7C2" stroke-width="1" />
<rect x="1264.3" y="307.3" width="175.9" height="27.4" fill="#F2F2F2" />
<path d="M520.5 323 H518.3 V315.3 H527.5 V317.5 M520.7 317.8 H530.3 V326 H520.7 Z M520.7 320 H530.3" fill="none" stroke="#151515" stroke-width="1.25" />
<path d="M548.5 316.8 H558.8 V324.8 H548.5 V323 M548.5 318.8 H558.8 M545.3 320.8 H553 M547.3 318.8 L545.3 320.8 L547.3 322.8" fill="none" stroke="#151515" stroke-width="1.25" />
<rect x="574" y="313.9" width="12.8" height="14.1" fill="#FBFCFA" />
<rect x="574.3" y="322.2" width="12.2" height="5.5" fill="#D6EBBF" />
<path d="M575 325 L578 323.3 M577 327 L580.5 324.8 M581.5 325 L584.5 327 M583 323.6 L586 325" fill="none" stroke="#9BD04F" stroke-width="1" />
<path d="M575.3 314.8 L583.5 315 L585 317.2 L582.8 318.4 L586.7 321 L586.4 322.6 L582.6 323 L581 324.6 L579 323 L575 321.6 L575.2 318.6 L576.6 317 Z" fill="#55A4D6" />
<path d="M575 316.8 H578.5 M582.5 317.6 H586" fill="none" stroke="#FBFCFA" stroke-width="0.9" />
<text x="595.5" y="325" font-size="11.5" fill="#333" textLength="100.2" lengthAdjust="spacing" >Long Field Academy</text>
<path d="M751.3 317.4 L757.6 314.2 L761 315.4 V326.4 L757.6 327.7 L751.3 325 Z M753.9 318.9 L757.3 317.9 V324.3 L753.9 323.4 Z" fill="#E8481F" fill-rule="evenodd"/>
<path d="M757.6 314.2 L761 315.4 V326.4 L757.6 327.7 Z" fill="#F0703A" />
<text x="770" y="325" font-size="11.5" fill="#333" textLength="113" lengthAdjust="spacing" >Microsoft Office Home</text>
<rect x="927.5" y="315" width="9.5" height="11.5" fill="#2A93DD" />
<path d="M927.5 315 H937 V320 L932.3 323 L927.5 320 Z" fill="#5CB8EE" />
<rect x="922.5" y="317" width="8.5" height="8.5" fill="#0F6CBD" rx="1" />
<circle cx="926.7" cy="321.3" r="2.2" fill="none" stroke="#fff" stroke-width="1.2" />
<text x="944.3" y="325" font-size="11.5" fill="#333" textLength="137.7" lengthAdjust="spacing" >Mail - Orla Nelmes - Outloc</text>
<rect x="1097.5" y="314.5" width="13.8" height="13" fill="#1F3550" />
<text x="1100.6" y="325.5" font-size="11.5" fill="#fff" font-weight="700" >S</text>
<text x="1119.5" y="325" font-size="11.5" fill="#333" textLength="136.8" lengthAdjust="spacing" >Satchel One | Learning platf</text>
<path d="M1281.5 316 C1277.5 313.5 1274 316.5 1274.5 320.5 C1275 324 1277.5 326.5 1280 326.8 M1280.5 318.5 C1278.5 317.5 1277 319 1277.5 320.8 C1278 322.5 1280.5 322.5 1281 320.8" fill="none" stroke="#7B6FD0" stroke-width="1.6" />
<text x="1294.3" y="325" font-size="11.5" fill="#222" textLength="82" lengthAdjust="spacing" >Different by One</text>
<path d="M1420.7 316.3 L1429.3 325 M1429.3 316.3 L1420.7 325" fill="none" stroke="#333" stroke-width="1" />
<path d="M1448.7 321.5 H1459.7 M1454.2 316 V327" fill="none" stroke="#222" stroke-width="1.1" />
<path d="M1476.3 319 L1481.9 324.5 L1487.5 319" fill="none" stroke="#333" stroke-width="1" />
<line x1="1592.5" y1="321.5" x2="1601.7" y2="321.5" stroke="#222" stroke-width="1.1" />
<path d="M1632.5 318.3 H1639.7 V325.2 H1632.5 Z M1634.5 318 V316.5 H1641.5 V323.3 H1640" fill="none" stroke="#222" stroke-width="1.1" />
<path d="M1672.3 316.7 L1681.5 325.2 M1681.5 316.7 L1672.3 325.2" fill="none" stroke="#222" stroke-width="1.2" />
<rect x="509.5" y="334.7" width="1187.5" height="34.8" fill="#F2F2F2" />
<line x1="509.5" y1="370" x2="1697" y2="370" stroke="#E2E2E2" stroke-width="1" />
<path d="M521.5 352.5 H534.3 M527.2 346.7 L521.5 352.5 L527.2 358.3" fill="none" stroke="#222" stroke-width="1.2" />
<path d="M555.5 352.5 H569 M563.3 346.7 L569 352.5 L563.3 358.3" fill="none" stroke="#A6A6A6" stroke-width="1.2" />
<path d="M598.5 347.2 A5.9 5.9 0 1 1 593.3 348.2 M593 345.3 L593.3 348.6 L596.5 348.2" fill="none" stroke="#222" stroke-width="1.1" />
<path d="M625.3 352.5 L631.5 346.5 L637.7 352.5 M626.8 351.2 V358.5 H630 V354.3 H633 V358.5 H636.2 V351.2" fill="none" stroke="#111" stroke-width="1.2" />
<rect x="663.5" y="338.8" width="880" height="26.6" fill="#fff" stroke="#D9D9D9" stroke-width="1" />
<rect x="672.7" y="351.7" width="8" height="6.2" fill="none" stroke="#9A9A9A" stroke-width="1.1" />
<path d="M674.3 351.7 V349.7 C674.3 346.5 679.1 346.5 679.1 349.7 V351.7" fill="none" stroke="#9A9A9A" stroke-width="1.1" />
<line x1="690.5" y1="342.5" x2="690.5" y2="362.5" stroke="#D0D0D0" stroke-width="1" />
<text x="695.5" y="356.3" font-size="12" fill="#767676" textLength="28.9" lengthAdjust="spacing" >https:</text>
<text x="724.6" y="356.3" font-size="12" fill="#767676" textLength="6.4" lengthAdjust="spacing" >//</text>
<text x="731.3" y="356.3" font-size="12" fill="#222" textLength="78" lengthAdjust="spacing" >nrich.maths.org</text>
<text x="809.5" y="356.3" font-size="12" fill="#767676" textLength="28.5" lengthAdjust="spacing" >/4339</text>
<path d="M1497.5 348.6 V358.5 M1491.4 348 C1493.5 347.3 1496 347.5 1497.5 348.6 C1499 347.5 1501.5 347.3 1503.6 348 V358.5 H1491.4 Z M1491.4 357 H1503.6" fill="none" stroke="#111" stroke-width="1.1" />
<path d="M1525.80 346.60 L1527.43 350.96 L1532.08 351.16 L1528.44 354.06 L1529.68 358.54 L1525.80 355.97 L1521.92 358.54 L1523.16 354.06 L1519.52 351.16 L1524.17 350.96 Z" fill="none" stroke="#111" stroke-width="1.1" stroke-linejoin="miter"/>
<path d="M1574.30 346.70 L1575.90 350.99 L1580.48 351.19 L1576.90 354.04 L1578.12 358.46 L1574.30 355.93 L1570.48 358.46 L1571.70 354.04 L1568.12 351.19 L1572.70 350.99 Z" fill="none" stroke="#111" stroke-width="1.1" stroke-linejoin="miter"/>
<rect x="1576.6" y="348.6" width="6.5" height="9.6" fill="#F2F2F2" />
<path d="M1576.8 350.1 H1582.3 M1577.3 353.3 H1582.3 M1576.8 356.4 H1582.3" fill="none" stroke="#111" stroke-width="1.1" />
<path d="M1609.6 346.3 L1612 347.6 L1606.6 357 L1604.3 358.3 L1604.6 355.6 Z M1606.6 357 C1609 354.3 1611.2 354.8 1611.6 356.8 C1612 358.8 1615 358.2 1617.2 356.6" fill="none" stroke="#111" stroke-width="1" stroke-linejoin="round"/>
<path d="M1640.5 351 H1638 V358 H1649 V355.5 M1641.5 355.5 C1641.5 351 1644.5 349.3 1647 349.3 V346.5 L1651 350.7 L1647 354.8 V352 C1644.5 352 1642.5 353 1641.5 355.5 Z" fill="none" stroke="#111" stroke-width="1.1" stroke-linejoin="round"/>
<circle cx="1674" cy="352" r="0.9" fill="#222" />
<circle cx="1679.5" cy="352" r="0.9" fill="#222" />
<circle cx="1685" cy="352" r="0.9" fill="#222" />
<g clip-path="url(#pageclip)">
<rect x="707" y="366" width="26.3" height="19.8" fill="#8C4A52" stroke="#777733" stroke-width="1.3" rx="1.5" />
<path d="M715 370 L728 384 M711 383.5 H731" fill="none" stroke="#5F2F36" stroke-width="0.8" />
<text x="740" y="369.2" font-size="13.2" fill="#0F3C8A" font-family="'DejaVu Sans','Liberation Sans',sans-serif" font-weight="700" >Hypotenuse</text>
<text x="740" y="385.7" font-size="13.2" fill="#0F3C8A" font-family="'DejaVu Sans','Liberation Sans',sans-serif" font-weight="700" textLength="93.7" lengthAdjust="spacing" >Lattice Points</text>
<text x="705.5" y="409.5" font-size="10.6" fill="#222" font-family="'DejaVu Sans','Liberation Sans',sans-serif" textLength="159" lengthAdjust="spacing" >The triangle OMN has vertices</text>
<text x="705.5" y="422.2" font-size="10.6" fill="#222" font-family="'DejaVu Sans','Liberation Sans',sans-serif" textLength="122" lengthAdjust="spacing" >on the axes with whole</text>
<text x="705.5" y="434.7" font-size="10.6" fill="#222" font-family="'DejaVu Sans','Liberation Sans',sans-serif" textLength="140.8" lengthAdjust="spacing" >number co-ordinates. How</text>
<text x="705.5" y="447.7" font-size="10.6" fill="#222" font-family="'DejaVu Sans','Liberation Sans',sans-serif" textLength="125.8" lengthAdjust="spacing" >many points with whole</text>
<text x="705.5" y="460.6" font-size="10.6" fill="#222" font-family="'DejaVu Sans','Liberation Sans',sans-serif" textLength="157.8" lengthAdjust="spacing" >number coordinates are there</text>
<text x="705.5" y="473.3" font-size="10.6" fill="#222" font-family="'DejaVu Sans','Liberation Sans',sans-serif" textLength="125" lengthAdjust="spacing" >on the hypotenuse MN?</text>
<line x1="887.5" y1="370" x2="887.5" y2="939" stroke="#E4E4E4" stroke-width="1" />
<text x="901.3" y="380.5" font-size="13.2" fill="#222" font-family="'DejaVu Sans','Liberation Sans',sans-serif" stroke="#222" stroke-width=".3" textLength="28" lengthAdjust="spacing" >one.</text>
<rect x="1683.3" y="370.5" width="13.7" height="568.5" fill="#E9E9E9" />
<rect x="1683.3" y="571" width="13.7" height="172.3" fill="#BDBDBD" />
<path d="M1686.5 379.3 L1689.9 375.8 L1693.3 379.3" fill="none" stroke="#A0A0A0" stroke-width="1" />
<path d="M1686.5 929.8 L1689.9 933.3 L1693.3 929.8" fill="none" stroke="#A0A0A0" stroke-width="1" />
</g>
<rect x="900" y="416.3" width="609" height="37.5" fill="url(#dots)" />
<text x="1116.3" y="437.5" font-size="18.2" fill="#fff" font-family="'DejaVu Sans','Liberation Sans',sans-serif" stroke="#fff" stroke-width=".3" textLength="160" lengthAdjust="spacing" >Different By One</text>
<path d="M1492.31 431.98 L1496.26 432.06 L1496.26 438.34 L1492.31 438.42 L1491.54 440.29 L1494.27 443.14 L1489.84 447.57 L1486.99 444.84 L1485.12 445.61 L1485.04 449.56 L1478.76 449.56 L1478.68 445.61 L1476.81 444.84 L1473.96 447.57 L1469.53 443.14 L1472.26 440.29 L1471.49 438.42 L1467.54 438.34 L1467.54 432.06 L1471.49 431.98 L1472.26 430.11 L1469.53 427.26 L1473.96 422.83 L1476.81 425.56 L1478.68 424.79 L1478.76 420.84 L1485.04 420.84 L1485.12 424.79 L1486.99 425.56 L1489.84 422.83 L1494.27 427.26 L1491.54 430.11 Z M1488.8000000000002 435.2 A6.9 6.9 0 1 0 1475.0 435.2 A6.9 6.9 0 1 0 1488.8000000000002 435.2 Z" fill="#B466DA" stroke="#B466DA" stroke-width="1.4" fill-rule="evenodd" stroke-linejoin="round"/>
<rect x="900" y="453.5" width="570.3" height="364.5" fill="#DCDCDC" />
<rect x="1470.3" y="453.5" width="38.6" height="364.5" fill="#80826F" />
<line x1="1508.6" y1="453.5" x2="1508.6" y2="818" stroke="#4A4A44" stroke-width="1" />
<text x="1478.3" y="470" font-size="12.3" fill="#fff" font-family="'DejaVu Sans','Liberation Sans',sans-serif" stroke="#fff" stroke-width=".3" textLength="23.4" lengthAdjust="spacing" >Add</text>
<text x="1477" y="484.5" font-size="12.3" fill="#fff" font-family="'DejaVu Sans','Liberation Sans',sans-serif" stroke="#fff" stroke-width=".3" textLength="26" lengthAdjust="spacing" >rods</text>
<circle cx="1490.5" cy="506.8" r="11.8" fill="#FFFFFF" stroke="#E4E4E4" stroke-width="1" />
<circle cx="1490.5" cy="534.57" r="11.8" fill="#FA1414" stroke="#FF3030" stroke-width="1" />
<circle cx="1490.5" cy="562.34" r="11.8" fill="#99DD55" stroke="#A5E566" stroke-width="1" />
<circle cx="1490.5" cy="590.11" r="11.8" fill="#FAA7B8" stroke="#FBB5C4" stroke-width="1" />
<circle cx="1490.5" cy="617.88" r="11.8" fill="#F0EB0A" stroke="#F4F040" stroke-width="1" />
<circle cx="1490.5" cy="645.65" r="11.8" fill="#216B5B" stroke="#2A7868" stroke-width="1" />
<circle cx="1490.5" cy="673.42" r="11.8" fill="#111111" stroke="#222" stroke-width="1" />
<circle cx="1490.5" cy="701.19" r="11.8" fill="#6B4636" stroke="#7A5444" stroke-width="1" />
<circle cx="1490.5" cy="728.96" r="11.8" fill="#4563FF" stroke="#5C77FF" stroke-width="1" />
<circle cx="1490.5" cy="756.73" r="11.8" fill="#DD5500" stroke="#F07A20" stroke-width="1" />
<rect x="1472.2" y="772.2" width="36.2" height="42.4" fill="#5E676B" />
<path d="M1477.5 782.5 H1502.5 L1500 810 H1480 Z" fill="#D2D2D2" />
<path d="M1476.7 779.5 H1503.3 V782.5 H1476.7 Z" fill="#D2D2D2" />
<path d="M1485.5 779.5 L1486.5 776 H1493.5 L1494.5 779.5" fill="none" stroke="#D2D2D2" stroke-width="1.5" />
<line x1="1483" y1="785" x2="1483.8" y2="807.5" stroke="#5E676B" stroke-width="1.4" />
<line x1="1487.3" y1="785" x2="1487.6" y2="807.5" stroke="#5E676B" stroke-width="1.4" />
<line x1="1492.7" y1="785" x2="1492.4" y2="807.5" stroke="#5E676B" stroke-width="1.4" />
<line x1="1497" y1="785" x2="1496.2" y2="807.5" stroke="#5E676B" stroke-width="1.4" />
<rect x="1100.7" y="479" width="198" height="39.3" fill="#808080" />
<text x="1110.7" y="491.3" font-size="12.6" fill="#1A1A1A" font-family="'DejaVu Sans','Liberation Sans',sans-serif" stroke="#1A1A1A" stroke-width=".3" textLength="178" lengthAdjust="spacing" >Using only two colours, make</text>
<text x="1113" y="505" font-size="12.6" fill="#1A1A1A" font-family="'DejaVu Sans','Liberation Sans',sans-serif" stroke="#1A1A1A" stroke-width=".3" textLength="173.3" lengthAdjust="spacing" >two lines which differ by one</text>
<rect x="1391.5" y="479.3" width="12.4" height="12.4" fill="#FFFFFF" stroke="#DCDCDC" stroke-width="0.8" />
<rect x="1391.5" y="492.5" width="25.6" height="12.4" fill="#FA1414" stroke="#E01010" stroke-width="0.8" />
<rect x="955.9" y="518.9" width="118" height="12.4" fill="#4563FF" stroke="#6C84FF" stroke-width="0.8" />
<rect x="1074.7" y="518.9" width="118" height="12.4" fill="#4563FF" stroke="#6C84FF" stroke-width="0.8" />
<rect x="1193.5" y="518.9" width="118" height="12.4" fill="#4563FF" stroke="#6C84FF" stroke-width="0.8" />
<rect x="1312.3" y="518.9" width="118" height="12.4" fill="#4563FF" stroke="#6C84FF" stroke-width="0.8" />
<rect x="955.9" y="532.1" width="91.6" height="12.4" fill="#111111" stroke="#333333" stroke-width="0.8" />
<rect x="1048.3" y="532.1" width="91.6" height="12.4" fill="#111111" stroke="#333333" stroke-width="0.8" />
<rect x="1140.7" y="532.1" width="91.6" height="12.4" fill="#111111" stroke="#333333" stroke-width="0.8" />
<rect x="1233.1" y="532.1" width="91.6" height="12.4" fill="#111111" stroke="#333333" stroke-width="0.8" />
<rect x="1325.5" y="532.1" width="91.6" height="12.4" fill="#111111" stroke="#333333" stroke-width="0.8" />
<rect x="955.9" y="558.5" width="52" height="12.4" fill="#FAA7B8" stroke="#E58FA3" stroke-width="0.8" />
<rect x="955.9" y="571.7" width="65.2" height="12.4" fill="#F0EB0A" stroke="#CFCB00" stroke-width="0.8" />
<rect x="1101.1" y="558.5" width="38.8" height="12.4" fill="#99DD55" stroke="#88C74A" stroke-width="0.8" />
<rect x="1101.1" y="571.7" width="25.6" height="12.4" fill="#FA1414" stroke="#E01010" stroke-width="0.8" />
<rect x="1206.7" y="558.5" width="12.4" height="12.4" fill="#FFFFFF" stroke="#DCDCDC" stroke-width="0.8" />
<rect x="1219.9" y="558.5" width="12.4" height="12.4" fill="#FFFFFF" stroke="#DCDCDC" stroke-width="0.8" />
<rect x="1206.7" y="571.7" width="38.8" height="12.4" fill="#99DD55" stroke="#88C74A" stroke-width="0.8" />
<rect x="1285.9" y="571.7" width="65.2" height="12.4" fill="#F0EB0A" stroke="#CFCB00" stroke-width="0.8" />
<rect x="1351.9" y="571.7" width="65.2" height="12.4" fill="#F0EB0A" stroke="#CFCB00" stroke-width="0.8" />
<rect x="1285.9" y="584.9" width="38.8" height="12.4" fill="#99DD55" stroke="#88C74A" stroke-width="0.8" />
<rect x="1325.5" y="584.9" width="38.8" height="12.4" fill="#99DD55" stroke="#88C74A" stroke-width="0.8" />
<rect x="1365.1" y="584.9" width="38.8" height="12.4" fill="#99DD55" stroke="#88C74A" stroke-width="0.8" />
<rect x="955.9" y="611.3" width="78.4" height="12.4" fill="#216B5B" stroke="#1C5B4D" stroke-width="0.8" />
<rect x="955.9" y="624.5" width="65.2" height="12.4" fill="#F0EB0A" stroke="#CFCB00" stroke-width="0.8" />
<rect x="1087.9" y="611.3" width="65.2" height="12.4" fill="#F0EB0A" stroke="#CFCB00" stroke-width="0.8" />
<rect x="1153.9" y="611.3" width="65.2" height="12.4" fill="#F0EB0A" stroke="#CFCB00" stroke-width="0.8" />
<rect x="1219.9" y="611.3" width="65.2" height="12.4" fill="#F0EB0A" stroke="#CFCB00" stroke-width="0.8" />
<rect x="1285.9" y="611.3" width="65.2" height="12.4" fill="#F0EB0A" stroke="#CFCB00" stroke-width="0.8" />
<rect x="1087.9" y="624.5" width="91.6" height="12.4" fill="#111111" stroke="#333333" stroke-width="0.8" />
<rect x="1180.3" y="624.5" width="91.6" height="12.4" fill="#111111" stroke="#333333" stroke-width="0.8" />
<rect x="1272.7" y="624.5" width="91.6" height="12.4" fill="#111111" stroke="#333333" stroke-width="0.8" />
<rect x="1338.7" y="650.9" width="91.6" height="12.4" fill="#111111" stroke="#333333" stroke-width="0.8" />
<rect x="1351.9" y="664.1" width="78.4" height="12.4" fill="#216B5B" stroke="#1C5B4D" stroke-width="0.8" />
<rect x="1048.3" y="664.1" width="12.4" height="12.4" fill="#FFFFFF" stroke="#DCDCDC" stroke-width="0.8" />
<rect x="1061.5" y="664.1" width="12.4" height="12.4" fill="#FFFFFF" stroke="#DCDCDC" stroke-width="0.8" />
<rect x="1074.7" y="664.1" width="12.4" height="12.4" fill="#FFFFFF" stroke="#DCDCDC" stroke-width="0.8" />
<rect x="1048.3" y="677.3" width="52" height="12.4" fill="#FAA7B8" stroke="#E58FA3" stroke-width="0.8" />
<rect x="1219.9" y="664.1" width="38.8" height="12.4" fill="#99DD55" stroke="#88C74A" stroke-width="0.8" />
<rect x="1219.9" y="677.3" width="52" height="12.4" fill="#FAA7B8" stroke="#E58FA3" stroke-width="0.8" />
<rect x="1299.1" y="703.7" width="131.2" height="12.4" fill="#DD5500" stroke="#F07A20" stroke-width="0.8" />
<rect x="1299.1" y="716.9" width="12.4" height="12.4" fill="#FFFFFF" stroke="#DCDCDC" stroke-width="0.8" />
<rect x="1312.3" y="716.9" width="12.4" height="12.4" fill="#FFFFFF" stroke="#DCDCDC" stroke-width="0.8" />
<rect x="1325.5" y="716.9" width="12.4" height="12.4" fill="#FFFFFF" stroke="#DCDCDC" stroke-width="0.8" />
<rect x="1338.7" y="716.9" width="12.4" height="12.4" fill="#FFFFFF" stroke="#DCDCDC" stroke-width="0.8" />
<rect x="1351.9" y="716.9" width="12.4" height="12.4" fill="#FFFFFF" stroke="#DCDCDC" stroke-width="0.8" />
<rect x="1365.1" y="716.9" width="12.4" height="12.4" fill="#FFFFFF" stroke="#DCDCDC" stroke-width="0.8" />
<rect x="1378.3" y="716.9" width="12.4" height="12.4" fill="#FFFFFF" stroke="#DCDCDC" stroke-width="0.8" />
<rect x="1391.5" y="716.9" width="12.4" height="12.4" fill="#FFFFFF" stroke="#DCDCDC" stroke-width="0.8" />
<rect x="1404.7" y="716.9" width="12.4" height="12.4" fill="#FFFFFF" stroke="#DCDCDC" stroke-width="0.8" />
<rect x="955.9" y="716.9" width="78.4" height="12.4" fill="#216B5B" stroke="#1C5B4D" stroke-width="0.8" />
<rect x="955.9" y="730.1" width="12.4" height="12.4" fill="#FFFFFF" stroke="#DCDCDC" stroke-width="0.8" />
<rect x="969.1" y="730.1" width="12.4" height="12.4" fill="#FFFFFF" stroke="#DCDCDC" stroke-width="0.8" />
<rect x="982.3" y="730.1" width="12.4" height="12.4" fill="#FFFFFF" stroke="#DCDCDC" stroke-width="0.8" />
<rect x="995.5" y="730.1" width="12.4" height="12.4" fill="#FFFFFF" stroke="#DCDCDC" stroke-width="0.8" />
<rect x="1008.7" y="730.1" width="12.4" height="12.4" fill="#FFFFFF" stroke="#DCDCDC" stroke-width="0.8" />
<rect x="1127.5" y="716.9" width="12.4" height="12.4" fill="#FFFFFF" stroke="#DCDCDC" stroke-width="0.8" />
<rect x="1140.7" y="716.9" width="12.4" height="12.4" fill="#FFFFFF" stroke="#DCDCDC" stroke-width="0.8" />
<rect x="1153.9" y="716.9" width="12.4" height="12.4" fill="#FFFFFF" stroke="#DCDCDC" stroke-width="0.8" />
<rect x="1167.1" y="716.9" width="12.4" height="12.4" fill="#FFFFFF" stroke="#DCDCDC" stroke-width="0.8" />
<rect x="1127.5" y="730.1" width="65.2" height="12.4" fill="#F0EB0A" stroke="#CFCB00" stroke-width="0.8" />
<path d="M1397 818 V793 H1444.2 L1457.7 803.8 V818 Z" fill="#BFE1F2" />
<text x="1408.4" y="812" font-size="17" fill="#111" font-family="'DejaVu Sans','Liberation Sans',sans-serif" stroke="#111" stroke-width=".3" textLength="38.4" lengthAdjust="spacing" >Hide</text>
<rect x="901.5" y="818.5" width="608.7" height="118" fill="#E4F0FB" stroke="#111" stroke-width="1.1" />
<path d="M919 827 H1013 Q1018 827.3 1021 829.6 H1108 Q1111 827.3 1116 827 H1206 Q1218 827 1218 839 V918 Q1218 929.8 1206 929.8 H1116 Q1111 929.6 1108 928.3 H1021 Q1018 929.6 1013 929.8 H919 Q907 929.8 907 918 V839 Q907 827 919 827 Z" fill="#595959" />
<rect x="1024.1" y="833" width="87.3" height="86.8" fill="#B4AFE2" />
<circle cx="962.7" cy="849.9" r="13.7" fill="#626262" />
<path transform="translate(962.7 849.9) rotate(0)" d="M0 -10.9 L10.9 0.9 H2.2 V11.1 H-2.2 V0.9 H-10.9 Z" fill="#B569CF"/>
<circle cx="990.3" cy="879" r="13.7" fill="#626262" />
<path transform="translate(990.3 879) rotate(90)" d="M0 -10.9 L10.9 0.9 H2.2 V11.1 H-2.2 V0.9 H-10.9 Z" fill="#B569CF"/>
<circle cx="962.7" cy="906.8" r="13.7" fill="#626262" />
<path transform="translate(962.7 906.8) rotate(180)" d="M0 -10.9 L10.9 0.9 H2.2 V11.1 H-2.2 V0.9 H-10.9 Z" fill="#B569CF"/>
<circle cx="935" cy="879" r="13.7" fill="#626262" />
<path transform="translate(935 879) rotate(270)" d="M0 -10.9 L10.9 0.9 H2.2 V11.1 H-2.2 V0.9 H-10.9 Z" fill="#B569CF"/>
<circle cx="1166.8" cy="866.2" r="17.2" fill="#626262" />
<path d="M1162.5 859.8 C1170.5 859.5 1174.2 865 1174.5 872.5" fill="none" stroke="#B569CF" stroke-width="3.6" />
<path d="M1154.7 858 L1163.2 851.8 L1165.4 864.3 Z M1168 871.8 L1180.6 870.2 L1174.3 880.2 Z" fill="#B569CF" />
<text x="1138" y="907.5" font-size="17" fill="#D6A6EC" font-family="'DejaVu Sans','Liberation Sans',sans-serif" stroke="#D6A6EC" stroke-width=".3" textLength="55" lengthAdjust="spacing" >Rotate</text>
<rect x="1224" y="824.5" width="53.8" height="107.3" fill="#A2C4D3" rx="2" />
<rect x="1281.8" y="824.5" width="53.5" height="107.3" fill="#A2C4D3" rx="2" />
<rect x="1338.9" y="824.5" width="53.8" height="107.3" fill="#A2C4D3" rx="2" />
<rect x="1396.3" y="824.5" width="53.5" height="107.3" fill="#A2C4D3" rx="2" />
<rect x="1453.8" y="824.5" width="53.7" height="107.3" fill="#A2C4D3" rx="2" />
<rect x="1232.9" y="828.5" width="38.4" height="37.1" fill="#A673B5" />
<rect x="1232.9" y="872.8" width="38.4" height="38.1" fill="#A673B5" />
<text x="1233.2" y="852.5" font-size="15.3" fill="#fff" font-family="'DejaVu Sans','Liberation Sans',sans-serif" stroke="#fff" stroke-width=".3" textLength="38.1" lengthAdjust="spacing" >Save</text>
<text x="1233.5" y="897.5" font-size="15.3" fill="#fff" font-family="'DejaVu Sans','Liberation Sans',sans-serif" stroke="#fff" stroke-width=".3" textLength="37.5" lengthAdjust="spacing" >Load</text>
<rect x="1290.9" y="828.5" width="35.6" height="36.5" fill="#A673B5" stroke="#9A68AA" stroke-width="1.2" />
<rect x="1290.9" y="872.8" width="35.6" height="35.5" fill="#A673B5" stroke="#7FE3FF" stroke-width="1.7" />
<text x="1297.9" y="853.5" font-size="16" fill="#fff" font-family="'DejaVu Sans','Liberation Sans',sans-serif" stroke="#fff" stroke-width=".3" textLength="21" lengthAdjust="spacing" >on</text>
<text x="1297.2" y="897.5" font-size="16" fill="#fff" font-family="'DejaVu Sans','Liberation Sans',sans-serif" stroke="#fff" stroke-width=".3" textLength="23" lengthAdjust="spacing" >off</text>
<rect x="1348.3" y="828.5" width="35.6" height="36.5" fill="#A673B5" stroke="#9A68AA" stroke-width="1.2" />
<rect x="1348.3" y="872.8" width="35.6" height="35.5" fill="#A673B5" stroke="#7FE3FF" stroke-width="1.7" />
<text x="1355.3" y="853.5" font-size="16" fill="#fff" font-family="'DejaVu Sans','Liberation Sans',sans-serif" stroke="#fff" stroke-width=".3" textLength="21" lengthAdjust="spacing" >on</text>
<text x="1354.6" y="897.5" font-size="16" fill="#fff" font-family="'DejaVu Sans','Liberation Sans',sans-serif" stroke="#fff" stroke-width=".3" textLength="23" lengthAdjust="spacing" >off</text>
<rect x="1405.2" y="827.9" width="36.4" height="36.7" fill="#A673B5" />
<rect x="1405.2" y="871.5" width="36.4" height="36.8" fill="#A673B5" />
<text x="1423.3" y="851.5" font-size="16" fill="#fff" font-family="'DejaVu Sans','Liberation Sans',sans-serif" stroke="#fff" stroke-width=".3" text-anchor="middle" >+</text>
<text x="1423.3" y="893.5" font-size="16" fill="#fff" font-family="'DejaVu Sans','Liberation Sans',sans-serif" stroke="#fff" stroke-width=".3" text-anchor="middle" >-</text>
<rect x="1460.7" y="854" width="41.7" height="41.6" fill="#A673B5" />
<text x="1461.3" y="870" font-size="15.3" fill="#fff" font-family="'DejaVu Sans','Liberation Sans',sans-serif" stroke="#fff" stroke-width=".3" textLength="40.9" lengthAdjust="spacing" >Clear</text>
<text x="1464.9" y="888.6" font-size="15.3" fill="#fff" font-family="'DejaVu Sans','Liberation Sans',sans-serif" stroke="#fff" stroke-width=".3" textLength="33.8" lengthAdjust="spacing" >rods</text>
<text x="1234.5" y="928.6" font-size="15.3" fill="#2A1840" font-family="'DejaVu Sans','Liberation Sans',sans-serif" stroke="#2A1840" stroke-width=".3" textLength="26.3" lengthAdjust="spacing" >File</text>
<text x="1292.3" y="928.6" font-size="15.3" fill="#2A1840" font-family="'DejaVu Sans','Liberation Sans',sans-serif" stroke="#2A1840" stroke-width=".3" textLength="31.8" lengthAdjust="spacing" >Grid</text>
<text x="1341.5" y="928.6" font-size="15.3" fill="#2A1840" font-family="'DejaVu Sans','Liberation Sans',sans-serif" stroke="#2A1840" stroke-width=".3" textLength="48.9" lengthAdjust="spacing" >Labels</text>
<text x="1401.2" y="928.6" font-size="15.3" fill="#2A1840" font-family="'DejaVu Sans','Liberation Sans',sans-serif" stroke="#2A1840" stroke-width=".3" textLength="43.3" lengthAdjust="spacing" >Zoom</text>
<rect x="509.5" y="939" width="1187.5" height="34.7" fill="#272B37" />
<rect x="850.5" y="939" width="420" height="34.700000000000045" fill="url(#tkgrad)"/>
<rect x="1480" y="939" width="217" height="34.7" fill="#343150" />
<rect x="1380" y="939" width="100" height="34.700000000000045" fill="url(#tkgrad2)"/>
<rect x="509.5" y="939" width="42" height="34.7" fill="#2E2B52" />
<rect x="524" y="950.2" width="5.6" height="5.8" fill="#fff" />
<rect x="530.6" y="949.3" width="7.6" height="6.7" fill="#fff" />
<rect x="524" y="957" width="5.6" height="5.8" fill="#fff" />
<rect x="530.6" y="957" width="7.6" height="6.7" fill="#fff" />
<rect x="551.5" y="939" width="299" height="34.7" fill="#F2F2F2" />
<circle cx="571.5" cy="953.5" r="4.3" fill="none" stroke="#333" stroke-width="1.2" />
<line x1="568.3" y1="956.8" x2="562.8" y2="962.5" stroke="#333" stroke-width="1.3" />
<text x="587" y="961.3" font-size="12.5" fill="#444" textLength="110.5" lengthAdjust="spacing" >Type here to search</text>
<circle cx="871.3" cy="957" r="6.2" fill="none" stroke="#fff" stroke-width="2" />
<path d="M907.8 950.7 H916.6 V962 H907.8 Z M905.3 950.7 H907.8 M905.3 962 H907.8 M919.6 950.2 V953.2 M919.6 955.3 V962.5" fill="none" stroke="#fff" stroke-width="1.3" />
<rect x="936.6" y="939" width="41.5" height="34.7" fill="#56565E" />
<rect x="936.6" y="972" width="41.5" height="1.8" fill="#A79DF0" />
<path d="M948.3 957.5 C948.5 951 953 947.5 958 947.5 C964 947.5 967 952 966.5 958.5 H953.5 C954 962 957.5 963.5 961 963 C963 962.8 964.5 962.2 965.7 961.3 V965 C963.5 966.3 961 966.8 958.5 966.7 C952 966.5 948 962.5 948.3 957.5 Z M953.5 955 H961.5 C961.3 952.5 959.8 951 957.5 951 C955.3 951 953.8 952.8 953.5 955 Z" fill="#1E88E5" />
<path d="M990.7 949 H997 L998.5 950.5 H1009.3 V964.5 H990.7 Z" fill="#F5B731" />
<rect x="990.7" y="953" width="18.6" height="11.5" fill="#FFD45E" />
<rect x="995" y="958.5" width="10" height="6" fill="#3A8FD9" />
<rect x="997" y="960.5" width="6" height="4" fill="#F5F5F5" />
<rect x="1038" y="947.5" width="15" height="18.5" fill="#2B7CD3" />
<rect x="1038" y="947.5" width="15" height="6" fill="#41A5EE" />
<rect x="1038" y="960" width="15" height="6" fill="#185ABD" />
<rect x="1032" y="951.5" width="11.5" height="11.5" fill="#185ABD" rx="1" />
<text x="1033.6" y="961" font-size="8.5" fill="#fff" font-weight="700" >W</text>
<path d="M1080 951 C1080 946.5 1089 946.5 1089 951" fill="none" stroke="#EEE" stroke-width="1.3" />
<rect x="1075.5" y="951" width="18.5" height="15" fill="#F2F2F2" />
<rect x="1080" y="954" width="4.5" height="4.5" fill="#F25022" />
<rect x="1085.5" y="954" width="4.5" height="4.5" fill="#7FBA00" />
<rect x="1080" y="959.5" width="4.5" height="4.5" fill="#00A4EF" />
<rect x="1085.5" y="959.5" width="4.5" height="4.5" fill="#FFB900" />
<path d="M1118 953.5 L1128 947.5 L1138 953.5 V965.5 H1118 Z" fill="#1A6FC9" />
<path d="M1118 954 L1128 960 L1138 954 V965.5 H1118 Z" fill="#3AA0F0" />
<path d="M1119.3 953.6 H1136.7 L1128 960.2 Z" fill="#F4F8FB" />
<path d="M1118 965.5 L1128 958.8 L1138 965.5 Z" fill="#4FB3F6" />
<path d="M1161.5 949 L1170.5 952.5 L1179.5 949 V961 L1170.5 967 L1161.5 961 Z M1165.5 954.5 V959.5 L1170.5 962.8 L1175.5 959.5 V954.5 L1170.5 956.5 Z" fill="#C8232C" fill-rule="evenodd"/>
<circle cx="1214.5" cy="957" r="9.3" fill="#E8623A" />
<path d="M1214.5 947.7 A9.3 9.3 0 0 1 1223.8 957 H1214.5 Z" fill="#F59B78" />
<rect x="1203.5" y="951.3" width="11.3" height="11.3" fill="#C43E1C" rx="1" />
<text x="1206.3" y="960.7" font-size="8.8" fill="#fff" font-weight="700" >P</text>
<rect x="1435" y="948.5" width="42" height="16.3" fill="#000" stroke="#fff" stroke-width="1.6" />
<rect x="1477.5" y="953" width="2.2" height="7.5" fill="#fff" />
<rect x="1436.3" y="949.8" width="12.5" height="13.7" fill="#16A34A" />
<text x="1444.7" y="962" font-size="12.8" fill="#fff" textLength="23" lengthAdjust="spacing" >31%</text>
<path d="M1502 959.7 L1506.8 954.8 L1511.6 959.7" fill="none" stroke="#fff" stroke-width="1.3" />
<path d="M1524 962 A9.5 9.5 0 0 1 1533 952.5 M1527 962 A6.5 6.5 0 0 1 1533 955.7 M1530 962 A3.3 3.3 0 0 1 1533 958.8" fill="none" stroke="#D8D8E0" stroke-width="1" />
<circle cx="1532.3" cy="961.5" r="1" fill="#fff" />
<path d="M1541.3 955.3 H1543.7 L1547 952.3 V962 L1543.7 959 H1541.3 Z" fill="none" stroke="#fff" stroke-width="1" />
<path d="M1549.2 954.8 C1550.4 956.2 1550.4 958.2 1549.2 959.5 M1551.3 953 C1553.4 955.3 1553.4 959 1551.3 961.3 M1553.4 951.3 C1556.2 954.3 1556.2 960 1553.4 963" fill="none" stroke="#D8D8E0" stroke-width="0.9" />
<text x="1564.5" y="960" font-size="10" fill="#fff" textLength="19.7" lengthAdjust="spacing" >ENG</text>
<text x="1608" y="951.8" font-size="10.8" fill="#fff" textLength="23.6" lengthAdjust="spacing" >08:43</text>
<text x="1595" y="968" font-size="10.8" fill="#fff" textLength="51" lengthAdjust="spacing" >08/07/2020</text>
<path d="M1661 949.7 H1674.5 V959.5 H1669 L1666 962.3 V959.5 H1661 Z" fill="#fff" />
<line x1="1663" y1="952.3" x2="1672.5" y2="952.3" stroke="#2E2B50" stroke-width="0.9" />
<line x1="1663" y1="954.7" x2="1672.5" y2="954.7" stroke="#2E2B50" stroke-width="0.9" />
<line x1="1663" y1="957.1" x2="1672.5" y2="957.1" stroke="#2E2B50" stroke-width="0.9" />
<circle cx="1675.2" cy="963.1" r="6.3" fill="#22212E" stroke="#5A5872" stroke-width="1" />
<text x="1675.2" y="966.8" font-size="9.6" fill="#fff" text-anchor="middle" >1</text>
<line x1="1691.5" y1="939" x2="1691.5" y2="973.7" stroke="#6E6C88" stroke-width="1" />
</g>
<rect x="509.5" y="306.5" width="1187.5" height="667.5" fill="none" stroke="#8A8A8A" stroke-width="1.2" />
<circle cx="509.5" cy="306.5" r="6.95" fill="#fff" stroke="#989898" stroke-width="2.8" />
<circle cx="1103.3" cy="306.5" r="6.95" fill="#fff" stroke="#989898" stroke-width="2.8" />
<circle cx="1697" cy="306.5" r="6.95" fill="#fff" stroke="#989898" stroke-width="2.8" />
<circle cx="509.5" cy="640" r="6.95" fill="#fff" stroke="#989898" stroke-width="2.8" />
<circle cx="1697" cy="640" r="6.95" fill="#fff" stroke="#989898" stroke-width="2.8" />
<circle cx="509.5" cy="974" r="6.95" fill="#fff" stroke="#989898" stroke-width="2.8" />
<circle cx="1103.3" cy="974" r="6.95" fill="#fff" stroke="#989898" stroke-width="2.8" />
<circle cx="1697" cy="974" r="6.95" fill="#fff" stroke="#989898" stroke-width="2.8" />
<g id="statusbar">
<rect x="4" y="1040" width="1916" height="33" fill="#F3F2F1" />
<line x1="4" y1="1040.5" x2="1920" y2="1040.5" stroke="#D6D6D6" stroke-width="1" />
<text x="15" y="1063" font-size="15.5" fill="#555" textLength="77.5" lengthAdjust="spacing" >Slide 1 of 1</text>
<path d="M130 1063 L126.5 1065.5 H121 V1049 H126.5 C128.5 1049 130 1050 130 1052 V1063 M130 1052 C130 1050 131.5 1049 133.5 1049 H139 V1057" fill="none" stroke="#444" stroke-width="1.3" />
<path d="M132.5 1060 L141.5 1069 M141.5 1060 L132.5 1069" fill="none" stroke="#444" stroke-width="1.3" />
<path d="M1302 1048 L1308.5 1052 M1308.5 1048 L1302 1052" fill="none" stroke="none" stroke-width="1" />
<path d="M1304.5 1050.5 L1309 1046.5 L1313.5 1050.5" fill="none" stroke="#444" stroke-width="1.3" />
<line x1="1297" y1="1055.5" x2="1321" y2="1055.5" stroke="#444" stroke-width="1.3" />
<line x1="1297" y1="1061" x2="1321" y2="1061" stroke="#444" stroke-width="1.3" />
<line x1="1297" y1="1066.5" x2="1321" y2="1066.5" stroke="#444" stroke-width="1.3" />
<text x="1324" y="1063" font-size="16.5" fill="#444" textLength="40.5" lengthAdjust="spacing" >Notes</text>
<rect x="1392" y="1041" width="60" height="32" fill="#C8C6C4" />
<path d="M1412.5 1048.5 H1432.5 V1065 H1412.5 Z M1416 1048.5 V1065 M1416 1061 H1432.5" fill="none" stroke="#333" stroke-width="1.4" />
<rect x="1420.5" y="1052" width="8" height="5" fill="none" stroke="#333" stroke-width="1.3" />
<rect x="1472" y="1049" width="8" height="7" fill="none" stroke="#444" stroke-width="1.3" />
<rect x="1483.5" y="1049" width="8" height="7" fill="none" stroke="#444" stroke-width="1.3" />
<rect x="1472" y="1060" width="8" height="7" fill="none" stroke="#444" stroke-width="1.3" />
<rect x="1483.5" y="1060" width="8" height="7" fill="none" stroke="#444" stroke-width="1.3" />
<path d="M1541 1051 C1538 1048 1535 1048 1532 1049 V1064 C1535 1063 1538 1063 1541 1066 C1544 1063 1547 1063 1550 1064 V1049 C1547 1048 1544 1048 1541 1051 V1066" fill="none" stroke="#444" stroke-width="1.3" />
<path d="M1534.5 1053 H1538.5 M1534.5 1056 H1538.5 M1534.5 1059 H1538.5 M1543.5 1053 H1547.5 M1543.5 1056 H1547.5 M1543.5 1059 H1547.5" fill="none" stroke="#444" stroke-width="1" />
<path d="M1592 1048.5 H1610 M1594.5 1048.5 V1058.5 H1607.5 V1048.5 M1601 1058.5 V1066.5 M1596.5 1066.5 H1605.5" fill="none" stroke="#444" stroke-width="1.3" />
<rect x="1598" y="1051.5" width="6" height="3" fill="none" stroke="#444" stroke-width="1" />
<line x1="1640" y1="1056.5" x2="1652" y2="1056.5" stroke="#555" stroke-width="1.2" />
<line x1="1660" y1="1056.5" x2="1808" y2="1056.5" stroke="#A0A0A0" stroke-width="1.5" />
<rect x="1700.5" y="1047.5" width="7.5" height="18" fill="#777" />
<line x1="1734" y1="1053" x2="1734" y2="1060" stroke="#999" stroke-width="1.2" />
<path d="M1816 1056.5 H1828 M1822 1050.5 V1062.5" fill="none" stroke="#555" stroke-width="1.2" />
<text x="1846" y="1064" font-size="16" fill="#555" textLength="30" lengthAdjust="spacing" >62%</text>
<path d="M1902 1051 H1910 V1062 H1902 Z" fill="none" stroke="#444" stroke-width="1.3" />
<path d="M1903 1048.5 L1906 1045.5 L1909 1048.5 M1903 1064.5 L1906 1067.5 L1909 1064.5 M1899.5 1053.5 L1896.5 1056.5 L1899.5 1059.5 M1912.5 1053.5 L1915.5 1056.5 L1912.5 1059.5" fill="none" stroke="#444" stroke-width="1.3" />
<rect x="4" y="1073" width="1916" height="7" fill="#1F2433" />
<rect x="76" y="1073" width="515" height="7" fill="#EFEFEF" />
<rect x="1452" y="1073" width="26.3" height="7" fill="#EFEFEF" />
</g>
</svg>
</body></html>
